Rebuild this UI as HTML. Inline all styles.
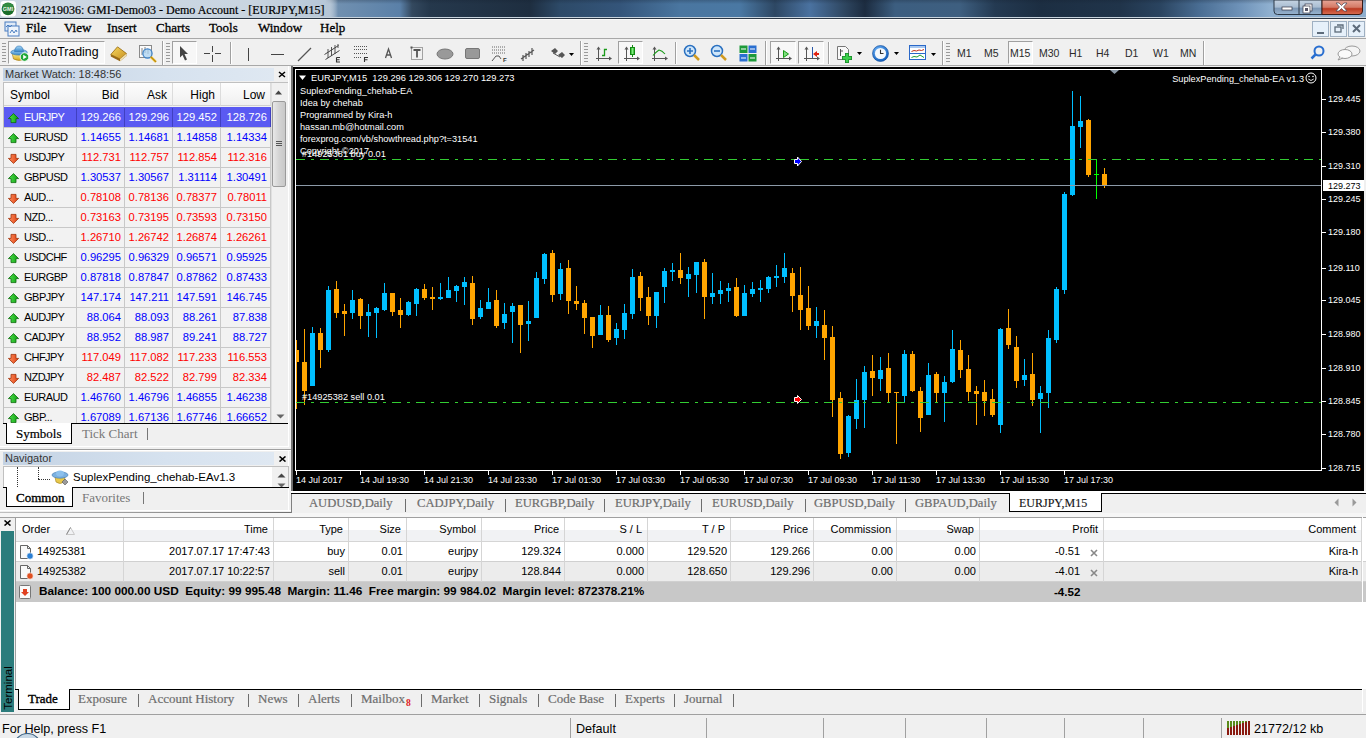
<!DOCTYPE html>
<html><head><meta charset="utf-8">
<style>
*{margin:0;padding:0;box-sizing:border-box}
html,body{width:1366px;height:738px;overflow:hidden;background:#f0f0f0;font-family:"Liberation Sans",sans-serif}
.a{position:absolute}
#title{left:0;top:0;width:1366px;height:19px;
background:linear-gradient(90deg,#c5d2df 0px,#b0c2d3 330px,#7090b0 338px,#5a80a8 400px,#34495f 412px,#25384c 430px,#1e2e40 530px,#2d4a68 560px,#34557a 620px,#4a76a0 680px,#4a78a3 740px,#2d4763 775px,#4a72a0 810px,#2e4660 845px,#1c2c40 865px,#3c5e80 895px,#3e5f80 960px,#243a52 995px,#1c2e42 1040px,#20344a 1120px,#2a4460 1160px,#4a6e94 1200px,#6e92b8 1240px,#8fb0d0 1270px,#8fafcf 1366px);
border-bottom:1px solid #2a3644;box-shadow:inset 0 -1px 0 #c8d4de}
#title .t{left:21px;top:2px;font:12px "Liberation Serif",serif;color:#000;white-space:pre;line-height:16px;-webkit-text-stroke:0.2px #000}
#menu{left:0;top:19px;width:1366px;height:19px;background:#f0f0f0;border-top:1px solid #fafafa}
#menu span{position:absolute;top:1px;font:13px "Liberation Serif",serif;color:#000;line-height:14px;-webkit-text-stroke:0.3px #000}
#tb{left:0;top:38px;width:1366px;height:28px;background:#f0f0f0;border-top:1px solid #a8a8a8;border-bottom:1px solid #a8a8a8}
.sep{position:absolute;width:2px;border-left:1px solid #a0a0a0;border-right:1px solid #fff}
.grip{position:absolute;width:4px;height:19px;background:repeating-linear-gradient(180deg,#9a9a9a 0 1px,transparent 1px 3px)}
.tbtn{position:absolute;border:1px solid;border-color:#a0a0a0 #fff #fff #a0a0a0;background:#f7f7f7}
.tf{position:absolute;top:10px;font:10.5px "Liberation Sans",sans-serif;color:#2a2a2a}
#left{left:0;top:66px;width:293px;height:447px;background:#f0f0f0;border-right:2px solid;border-image:linear-gradient(90deg,#c0c0c0,#707070) 1;border-bottom:1px solid #a0a0a0}
.phdr{position:absolute;left:3px;width:271px;height:13px;background:linear-gradient(90deg,#c3d2e3,#d6e2ef 60%,#dfe8f2);}
.phdr span{position:absolute;left:2px;top:0;font:11px "Liberation Sans",sans-serif;color:#333;line-height:13px}
.px{position:absolute;font:bold 12px "Liberation Sans",sans-serif;color:#000;line-height:12px}
.mwgrid{position:absolute;left:3px;top:82px;width:285px;height:342px;background:#f2f2f2;border:1px solid #c8c8c8;overflow:hidden}
.mwh{position:absolute;top:0;height:23px;font:12px "Liberation Sans",sans-serif;color:#000;border-right:1px solid #dcdcdc;background:linear-gradient(#fdfdfd,#f0f0f0);line-height:23px;border-bottom:1px solid #d0d0d0}
.mwr{position:absolute;left:0;width:267px;height:20px;border-bottom:1px solid #c8c8c8}
.mwr.sel{background:#5a5af2}
.mwr .c0{position:absolute;left:0;top:0;width:73px;height:20px;border-right:1px solid #c8c8c8;font:12px "Liberation Sans",sans-serif;line-height:19px}
.mwr .c0 span{position:absolute;left:20px}
.ar{position:absolute;left:4px;top:5px}
.mwr .cn{position:absolute;top:0;height:20px;text-align:right;font:11.2px "Liberation Sans",sans-serif;line-height:19px;padding-right:2px}
.vl{position:absolute;width:1px;background:#c8c8c8}
#chart{left:293px;top:67px;width:1071px;height:424px;background:#000}
svg text{font-family:"Liberation Sans",sans-serif}
.ax{font-size:9px;fill:#fff}
.ct{font-size:9.2px;fill:#fff}
#ctabs{left:291px;top:493px;width:1075px;height:20px;background:#f0f0f0;border-top:1px solid #000}
.ctab{position:absolute;top:2px;font:12.6px "Liberation Serif",serif;color:#6d6d6d;line-height:15px;white-space:pre;-webkit-text-stroke:0.2px #6d6d6d}
.tsep{position:absolute;width:1px;background:#6d6d6d}
#term{left:0;top:513px;width:1366px;height:200px;background:#f0f0f0}
.th{position:absolute;top:0;height:24px;font:11px "Liberation Sans",sans-serif;color:#000;line-height:22px;border-right:1px solid #d5d5d5;text-align:right;padding-right:5px;white-space:pre}
.td{position:absolute;height:20px;font:11px "Liberation Sans",sans-serif;color:#000;line-height:19px;text-align:right;padding-right:3px;white-space:pre;border-right:1px solid #d5d5d5}
.btab{position:absolute;top:3px;font:13px "Liberation Serif",serif;color:#6d6d6d;line-height:15px;white-space:pre;-webkit-text-stroke:0.2px #6d6d6d}
#status{left:0;top:714px;width:1366px;height:24px;background:#f0f0f0;border-top:1px solid #a0a0a0}
#status span{position:absolute;top:7px;font:12.6px "Liberation Sans",sans-serif;color:#000;line-height:14px;white-space:pre}
</style></head><body>

<!-- TITLE -->
<div id="title" class="a">
  <div class="a" style="left:0;top:0;width:1366px;height:4px;background:linear-gradient(rgba(20,30,45,0.25),rgba(20,30,45,0))"></div>
  <div class="a" style="left:0;top:0;width:338px;height:17px;background:linear-gradient(90deg,#cdd8e3 0,#c9d5e1 250px,#b7c7d7 325px,rgba(160,180,200,0) 338px)"></div>
  <svg class="a" style="left:0;top:1px" width="17" height="16"><rect x="0.5" y="0" width="15.5" height="15.5" rx="3" fill="#fff"/><circle cx="8" cy="7.8" r="6.4" fill="#1a6e2a"/><ellipse cx="8" cy="5.5" rx="5" ry="3.5" fill="#48a858" opacity="0.55"/><text x="8" y="9.8" font-size="5.5" fill="#e8f4e8" text-anchor="middle" font-weight="bold">GMI</text></svg>
  <div class="a t">2124219036: GMI-Demo03 - Demo Account - [EURJPY,M15]</div>
  <svg class="a" style="left:1273px;top:0" width="91" height="16" viewBox="0 0 91 16">
    <defs>
      <linearGradient id="wb" x1="0" y1="0" x2="0" y2="1"><stop offset="0" stop-color="#c5d3e2"/><stop offset="0.5" stop-color="#a9bdd2"/><stop offset="0.55" stop-color="#7b96b4"/><stop offset="1" stop-color="#98b4cf"/></linearGradient>
      <linearGradient id="wc" x1="0" y1="0" x2="0" y2="1"><stop offset="0" stop-color="#e7a698"/><stop offset="0.5" stop-color="#d47a66"/><stop offset="0.6" stop-color="#bb3a22"/><stop offset="1" stop-color="#d86e52"/></linearGradient>
    </defs>
    <path d="M1 0 L1 11 Q1 14.5 4.5 14.5 L49 14.5 L49 0 Z" fill="url(#wb)" stroke="#2c3846" stroke-width="1"/>
    <line x1="26" y1="0" x2="26" y2="14" stroke="#2c3846"/>
    <path d="M49 0 L49 14.5 L86 14.5 Q89.5 14.5 89.5 11 L89.5 0 Z" fill="url(#wc)" stroke="#3a1a14" stroke-width="1"/>
    <rect x="9" y="7" width="10" height="3" fill="#fff" stroke="#334" stroke-width="0.7"/>
    <rect x="32" y="4" width="7" height="7" fill="#fff" stroke="#334" stroke-width="0.7"/><rect x="30" y="6" width="7" height="7" fill="#fff" stroke="#334" stroke-width="0.7"/><rect x="32" y="8" width="3" height="3" fill="#556"/>
    <path d="M63 3 L66 3 L68.5 5.5 L71 3 L74 3 L70.5 7 L74 11 L71 11 L68.5 8.5 L66 11 L63 11 L66.5 7 Z" fill="#fff" stroke="#445" stroke-width="0.7"/>
  </svg>
</div>

<!-- MENU -->
<div id="menu" class="a">
  <svg class="a" style="left:4px;top:1px" width="16" height="16" viewBox="0 0 16 16"><rect x="1" y="1" width="11" height="9" fill="#dfeaf7" stroke="#4a7dc0"/><rect x="4" y="5" width="11" height="10" fill="#eef4fb" stroke="#4a7dc0"/><path d="M2 6 l2 -2 l2 2 l2 -2" stroke="#4a7dc0" fill="none"/><path d="M6 12 l2 -3 l2 3 l2 -3 l1 2" stroke="#4a7dc0" fill="none"/></svg>
  <span style="left:26px">File</span>
  <span style="left:64px">View</span>
  <span style="left:107px">Insert</span>
  <span style="left:156px">Charts</span>
  <span style="left:209px">Tools</span>
  <span style="left:258px">Window</span>
  <span style="left:320px">Help</span>
  <svg class="a" style="left:1312px;top:1px" width="54" height="17" viewBox="0 0 54 17">
    <g fill="#e6f0fa" stroke="#9fb0c2"><rect x="0.5" y="0.5" width="16" height="15"/><rect x="18.5" y="0.5" width="16" height="15"/><rect x="36.5" y="0.5" width="16" height="15"/></g>
    <rect x="5" y="11" width="7" height="2" fill="#5d6b7a"/>
    <rect x="23" y="6" width="6" height="5" fill="none" stroke="#5d6b7a" stroke-width="1.3"/><path d="M25 4 L31 4 L31 8" fill="none" stroke="#5d6b7a" stroke-width="1.3"/>
    <path d="M41 4 L48 11 M48 4 L41 11" stroke="#5d6b7a" stroke-width="2"/>
  </svg>
</div>

<!-- TOOLBAR -->
<div id="tb" class="a">
<div class="grip" style="left:2px;top:4px"></div>
<div class="tbtn" style="left:8px;top:2px;width:97px;height:23px"></div>
<svg class="a" style="left:10px;top:5px" width="20" height="19" viewBox="0 0 20 19"><defs><linearGradient id="yb" x1="0" x2="0" y1="0" y2="1"><stop offset="0" stop-color="#fff4a0"/><stop offset="1" stop-color="#d8a818"/></linearGradient><linearGradient id="hb" x1="0" x2="0" y1="0" y2="1"><stop offset="0" stop-color="#a8d8f8"/><stop offset="1" stop-color="#3a88c8"/></linearGradient></defs><path d="M2 9 L16 9 L14.5 15 Q9 18 3.5 15 Z" fill="url(#yb)" stroke="#a07818" stroke-width="0.6"/><ellipse cx="9" cy="8.3" rx="8.3" ry="2.8" fill="url(#hb)" stroke="#2a70b0" stroke-width="0.6"/><path d="M4.5 7.5 Q5 2 9 2 Q13 2 13.5 7.5 Z" fill="url(#hb)" stroke="#2a70b0" stroke-width="0.6"/><circle cx="14.5" cy="13" r="4.3" fill="#20a838" stroke="#fff" stroke-width="0.9"/><path d="M13.2 10.8 L16.8 13 L13.2 15.2 Z" fill="#fff"/></svg>
<span class="a" style="left:32px;top:6px;font:12.3px 'Liberation Sans',sans-serif;line-height:14px;color:#000">AutoTrading</span>
<svg class="a" style="left:110px;top:7px" width="18" height="16" viewBox="0 0 18 16"><defs><linearGradient id="bk" x1="0" y1="0" x2="1" y2="1"><stop offset="0" stop-color="#f6d860"/><stop offset="1" stop-color="#c89020"/></linearGradient></defs><path d="M0.8 8.5 L7.5 0.8 L16.5 7.5 L16.5 10 L10 15.2 L0.8 10.5 Z" fill="#9a6a18"/><path d="M0.8 8.5 L7.5 0.8 L16.5 7.5 L10 13 Z" fill="url(#bk)" stroke="#8a6010" stroke-width="0.6"/><path d="M10 13 L16.5 7.5 L16.5 10 L10 15.2 Z" fill="#f0e0b0"/></svg>
<svg class="a" style="left:138px;top:6px" width="20" height="19" viewBox="0 0 20 19"><rect x="1.5" y="0.5" width="12" height="12" fill="#fbfbfb" stroke="#8a8a8a"/><path d="M4 3 V10 M7 2 V8 M10 4 V9" stroke="#777" stroke-width="0.9"/><circle cx="9.5" cy="8.5" r="4.6" fill="rgba(170,210,240,0.75)" stroke="#3a80c8" stroke-width="1.2"/><path d="M12.8 11.8 L18 17" stroke="#e0b020" stroke-width="2.4"/><path d="M12.8 11.8 L18 17" stroke="#a07010" stroke-width="0.6"/></svg>
<div class="sep" style="left:162px;top:2px;height:24px"></div>
<div class="grip" style="left:166px;top:4px"></div>
<div class="tbtn" style="left:172px;top:2px;width:25px;height:23px"></div>
<svg class="a" style="left:179px;top:7px" width="10" height="15" viewBox="0 0 10 15"><path d="M1 0 L9 8 L5.5 8 L8 13.5 L6 14.5 L3.5 9 L1 11.5 Z" fill="#444"/></svg>
<svg class="a" style="left:204px;top:7px" width="17" height="16"><path d="M8.5 0 V6 M8.5 9 V16 M0 7.5 H6 M11 7.5 H17" stroke="#444" stroke-width="1"/></svg>
<div class="sep" style="left:230px;top:3px;height:22px"></div>
<div class="a" style="left:248px;top:9px;width:1px;height:13px;background:#444"></div>
<div class="a" style="left:271px;top:15px;width:13px;height:1px;background:#444"></div>
<svg class="a" style="left:297px;top:8px" width="15" height="15"><path d="M1 14 L14 1" stroke="#555" stroke-width="1.2"/></svg>
<svg class="a" style="left:320px;top:4px" width="110" height="21" viewBox="320 43 110 21"><path d="M324.5 54.5 L338.5 45.5 M325.5 59.5 L339.5 50.5" stroke="#444" stroke-width="1"/><path d="M328 49 V58 M331.5 47 V56 M335 45 V54 M338 44 V48" stroke="#444" stroke-width="0.9"/><path d="M336.5 57.5 H340 M336.5 57.5 V62 H340 M336.5 59.8 H339.5" stroke="#333" stroke-width="1.1" fill="none"/><path d="M354 46.5 H367 M354 49.5 H367 M354 53.5 H367 M354 57.5 H362" stroke="#555" stroke-width="1" stroke-dasharray="1 1"/><path d="M364 57.5 H368 M364.5 57.5 V62 M364.5 59.8 H367.5" stroke="#333" stroke-width="1.1" fill="none"/><path d="M385.5 58 L388.5 49 L391.5 58 M386.6 55 H390.4" stroke="#555" stroke-width="1.3" fill="none"/><rect x="411.5" y="47.5" width="11" height="12" fill="none" stroke="#555" stroke-dasharray="1 1"/><rect x="410.5" y="46.5" width="2" height="2" fill="#555"/><path d="M413.5 50 H420.5 M417 50 V57.5" stroke="#555" stroke-width="1.8"/></svg>
<svg class="a" style="left:436px;top:9px" width="18" height="12"><ellipse cx="9" cy="6" rx="8" ry="5" fill="#999" stroke="#777"/></svg>
<svg class="a" style="left:465px;top:9px" width="16" height="12"><rect x="0.5" y="0.5" width="14" height="10" rx="1.5" fill="#999" stroke="#777"/></svg>
<svg class="a" style="left:491px;top:6px" width="19" height="18" viewBox="0 0 19 18"><path d="M1 2 H14 M1 5 H14 M1 8 H14" stroke="#666" stroke-dasharray="1 1"/><path d="M1 16 L5 11 L8 11 L10 14" stroke="#555" fill="none"/><text x="12" y="17" font-size="6" fill="#333" font-weight="bold">F</text></svg>
<svg class="a" style="left:520px;top:7px" width="16" height="16" viewBox="0 0 16 16"><path d="M1 13 L14 4 M3 9 V15 M6 7 V13 M9 5 V11 M12 2 V9" stroke="#555" stroke-width="1.2"/></svg>
<svg class="a" style="left:549px;top:9px" width="26" height="13" viewBox="0 0 26 13"><path d="M2 3 L6 0 L9 3 L6 6 Z M9 7 L13 4 L16 7 L13 10 Z" fill="#555"/><path d="M4 5 L11 9" stroke="#555"/><path d="M20 5 L25 5 L22.5 8 Z" fill="#000"/></svg>
<div class="sep" style="left:580px;top:2px;height:24px"></div>
<div class="grip" style="left:584px;top:4px"></div>
<div class="tbtn" style="left:618px;top:2px;width:25px;height:23px"></div>
<svg class="a" style="left:590px;top:4px" width="80" height="20" viewBox="590 43 80 20"><defs><linearGradient id="cg" x1="0" x2="1"><stop offset="0" stop-color="#1a9a1a"/><stop offset="0.5" stop-color="#7ef07e"/><stop offset="1" stop-color="#1a9a1a"/></linearGradient></defs><path d="M598.5 48 V61" stroke="#555" stroke-width="1"/><path d="M596 58.5 H610" stroke="#555" stroke-width="1"/><path d="M596.5 49.5 L598.5 46.5 L600.5 49.5 Z" fill="#555"/><path d="M609 56.5 L612 58.5 L609 60.5 Z" fill="#555"/><path d="M602 55.5 H604.5 V49.5 H607" stroke="#1a9a1a" stroke-width="1.3" fill="none"/><path d="M626.5 48 V61" stroke="#555" stroke-width="1"/><path d="M624 58.5 H638" stroke="#555" stroke-width="1"/><path d="M624.5 49.5 L626.5 46.5 L628.5 49.5 Z" fill="#555"/><path d="M637 56.5 L640 58.5 L637 60.5 Z" fill="#555"/><path d="M632.5 45 V57" stroke="#128a12"/><rect x="630.5" y="47.5" width="4" height="7" fill="url(#cg)" stroke="#128a12"/><path d="M654.5 48 V61" stroke="#555" stroke-width="1"/><path d="M652 58.5 H666" stroke="#555" stroke-width="1"/><path d="M652.5 49.5 L654.5 46.5 L656.5 49.5 Z" fill="#555"/><path d="M665 56.5 L668 58.5 L665 60.5 Z" fill="#555"/><path d="M653 55.5 Q656 52 659 50 Q662 50.5 665 54" stroke="#1a9a1a" stroke-width="1.1" fill="none"/></svg>
<div class="sep" style="left:675px;top:3px;height:22px"></div>
<svg class="a" style="left:683px;top:5px" width="18" height="19" viewBox="0 0 18 19"><circle cx="7" cy="7" r="5.5" fill="#cfe6fa" stroke="#2a70c0" stroke-width="1.5"/><path d="M4 7 H10 M7 4 V10" stroke="#2a70c0" stroke-width="1.6"/><path d="M11 11 L16 16" stroke="#d09a20" stroke-width="2.5"/></svg>
<svg class="a" style="left:710px;top:5px" width="18" height="19" viewBox="0 0 18 19"><circle cx="7" cy="7" r="5.5" fill="#cfe6fa" stroke="#2a70c0" stroke-width="1.5"/><path d="M4 7 H10" stroke="#2a70c0" stroke-width="1.6"/><path d="M11 11 L16 16" stroke="#d09a20" stroke-width="2.5"/></svg>
<svg class="a" style="left:739px;top:6px" width="18" height="17" viewBox="0 0 18 17"><rect x="0.5" y="0.5" width="8" height="7.5" fill="#1d9a3a"/><rect x="9.5" y="0.5" width="8" height="7.5" fill="#2a6fd0"/><rect x="0.5" y="9" width="8" height="7.5" fill="#2a6fd0"/><rect x="9.5" y="9" width="8" height="7.5" fill="#1d9a3a"/><path d="M2 4 H7 M11 4 H16 M2 13 H7 M11 13 H16" stroke="#fff" stroke-width="1.2"/></svg>
<div class="sep" style="left:765px;top:2px;height:24px"></div>
<div class="tbtn" style="left:770px;top:2px;width:26px;height:23px"></div>
<svg class="a" style="left:770px;top:4px" width="30" height="20" viewBox="770 43 30 20"><path d="M778.5 48 V61" stroke="#555" stroke-width="1"/><path d="M776 58.5 H790" stroke="#555" stroke-width="1"/><path d="M776.5 49.5 L778.5 46.5 L780.5 49.5 Z" fill="#555"/><path d="M789 56.5 L792 58.5 L789 60.5 Z" fill="#555"/><path d="M783.5 50.5 L788.5 54 L783.5 57.5 Z" fill="#7ee07e" stroke="#1a9a1a"/></svg>
<div class="tbtn" style="left:798px;top:2px;width:26px;height:23px"></div>
<svg class="a" style="left:798px;top:4px" width="30" height="20" viewBox="798 43 30 20"><path d="M806.5 48 V61" stroke="#555" stroke-width="1"/><path d="M804 58.5 H818" stroke="#555" stroke-width="1"/><path d="M804.5 49.5 L806.5 46.5 L808.5 49.5 Z" fill="#555"/><path d="M817 56.5 L820 58.5 L817 60.5 Z" fill="#555"/><path d="M812.5 47 V58" stroke="#2a58a8"/><path d="M813 54 L817 51 V53 H819 V55 H817 V57 Z" fill="#e02010"/></svg>
<div class="sep" style="left:828px;top:3px;height:22px"></div>
<svg class="a" style="left:837px;top:5px" width="26" height="20" viewBox="0 0 26 20"><path d="M0.5 2.5 H8.5 L11.5 5.5 V15.5 H0.5 Z" fill="#f8f8f8" stroke="#777"/><path d="M3.5 5 V12 M3.5 7 H6" stroke="#555"/><path d="M10 9 V19 M5 14 H15" stroke="#1a8a2a" stroke-width="4"/><path d="M10 9.8 V18.2 M5.8 14 H14.2" stroke="#3cd04c" stroke-width="2.4"/><path d="M20 8 L25 8 L22.5 11 Z" fill="#000"/></svg>
<svg class="a" style="left:872px;top:5px" width="29" height="19" viewBox="0 0 29 19"><defs><radialGradient id="clk" cx="0.4" cy="0.35" r="0.7"><stop offset="0" stop-color="#7fc0ff"/><stop offset="1" stop-color="#0a58b8"/></radialGradient></defs><circle cx="8.5" cy="9.5" r="8" fill="url(#clk)" stroke="#0c4a9a" stroke-width="0.6"/><circle cx="8.5" cy="9.5" r="5.6" fill="#f4f8fc"/><path d="M8.5 5.8 V9.5 H11.5" stroke="#333" stroke-width="1.1" fill="none"/><path d="M22 8 L27 8 L24.5 11 Z" fill="#000"/></svg>
<svg class="a" style="left:909px;top:6px" width="29" height="17" viewBox="0 0 29 17"><rect x="0.5" y="0.5" width="16" height="14" fill="#fff" stroke="#2a68c8"/><rect x="1" y="1" width="15" height="2" fill="#a8c8f0"/><path d="M1 8.5 H16" stroke="#2a68c8"/><path d="M2.5 6.5 L5 5.5 L7.5 6 L10 5 L12.5 5.5 L15 4.5" stroke="#c03018" fill="none"/><path d="M2.5 12.5 L5 11.5 L8 12 L11 10 L15 12.5" stroke="#20a030" fill="none"/><path d="M22 8 L27 8 L24.5 11 Z" fill="#000"/></svg>
<div class="sep" style="left:942px;top:2px;height:24px"></div>
<div class="grip" style="left:946px;top:4px"></div>
<span class="tf" style="left:957px;top:8px">M1</span>
<span class="tf" style="left:984px;top:8px">M5</span>
<div class="tbtn" style="left:1008px;top:2px;width:25px;height:23px"></div>
<span class="tf" style="left:1010px;top:8px">M15</span>
<span class="tf" style="left:1039px;top:8px">M30</span>
<span class="tf" style="left:1069px;top:8px">H1</span>
<span class="tf" style="left:1096px;top:8px">H4</span>
<span class="tf" style="left:1125px;top:8px">D1</span>
<span class="tf" style="left:1153px;top:8px">W1</span>
<span class="tf" style="left:1180px;top:8px">MN</span>
<div class="sep" style="left:1203px;top:2px;height:24px"></div>
<svg class="a" style="left:1310px;top:6px" width="15" height="15" viewBox="0 0 15 15"><circle cx="9" cy="6" r="4.5" fill="none" stroke="#2a6fd0" stroke-width="2"/><path d="M6 9 L1.5 13.5" stroke="#2a6fd0" stroke-width="2.5"/></svg>
<svg class="a" style="left:1337px;top:6px" width="24" height="16" viewBox="0 0 24 16"><ellipse cx="15" cy="6" rx="8" ry="5" fill="#f4f4f4" stroke="#999"/><ellipse cx="8" cy="9" rx="7" ry="4.5" fill="#fafafa" stroke="#999"/><path d="M3 12 L1 15 L6 13" fill="#fafafa" stroke="#999"/></svg>
</div>

<!-- LEFT PANEL -->
<div id="left" class="a">
<div class="phdr" style="top:2px"><span>Market Watch: 18:48:56</span></div>
<svg class="a" style="left:278px;top:5px" width="8" height="7"><path d="M1 1 L7 6 M7 1 L1 6" stroke="#000" stroke-width="1.5"/></svg>
<div class="a" style="left:3px;top:16px;width:286px;height:342px;background:#f2f2f2;border:1px solid #c0c0c0;border-bottom:none;overflow:hidden">
<div class="mwh" style="left:0px;width:73px;text-align:left;padding-left:6px;line-height:25px">Symbol</div>
<div class="mwh" style="left:73px;width:48px;text-align:right;padding-right:5px;line-height:25px">Bid</div>
<div class="mwh" style="left:121px;width:48px;text-align:right;padding-right:5px;line-height:25px">Ask</div>
<div class="mwh" style="left:169px;width:48px;text-align:right;padding-right:5px;line-height:25px">High</div>
<div class="mwh" style="left:217px;width:50px;text-align:right;padding-right:5px;line-height:25px">Low</div>
<div class="a" style="left:0;top:25px;width:267px;height:20px;background:#5a5af2;box-shadow:0 -1px 0 #5a5af2;border-bottom:1px solid #c8c8c8">
<div class="a" style="left:0;top:0;width:73px;height:19px;border-right:1px solid #4040c0"><svg class="ar" width="12" height="11" viewBox="0 0 12 11"><defs><linearGradient id="ug" x1="0" x2="1"><stop offset="0" stop-color="#50e050"/><stop offset="1" stop-color="#10a010"/></linearGradient></defs><path d="M5.5 0.6 L10.6 5.6 L8 5.6 L8 9.6 L3 9.6 L3 5.6 L0.4 5.6 Z" fill="url(#ug)" stroke="#0a6a0a" stroke-width="0.8" stroke-linejoin="round"/></svg><span class="a" style="left:20px;top:3px;font:11px 'Liberation Sans',sans-serif;letter-spacing:-0.5px;line-height:13px;color:#fff">EURJPY</span></div>
<div class="a" style="left:73px;top:0;width:48px;height:19px;border-right:1px solid #4040c0;text-align:right;padding-right:3px;font:11.2px 'Liberation Sans',sans-serif;line-height:19px;color:#fff">129.266</div>
<div class="a" style="left:121px;top:0;width:48px;height:19px;border-right:1px solid #4040c0;text-align:right;padding-right:3px;font:11.2px 'Liberation Sans',sans-serif;line-height:19px;color:#fff">129.296</div>
<div class="a" style="left:169px;top:0;width:48px;height:19px;border-right:1px solid #4040c0;text-align:right;padding-right:3px;font:11.2px 'Liberation Sans',sans-serif;line-height:19px;color:#fff">129.452</div>
<div class="a" style="left:217px;top:0;width:50px;height:19px;border-right:1px solid #4040c0;text-align:right;padding-right:3px;font:11.2px 'Liberation Sans',sans-serif;line-height:19px;color:#fff">128.726</div>
</div>
<div class="a" style="left:0;top:45px;width:267px;height:20px;border-bottom:1px solid #c8c8c8">
<div class="a" style="left:0;top:0;width:73px;height:19px;border-right:1px solid #c8c8c8"><svg class="ar" width="12" height="11" viewBox="0 0 12 11"><defs><linearGradient id="ug" x1="0" x2="1"><stop offset="0" stop-color="#50e050"/><stop offset="1" stop-color="#10a010"/></linearGradient></defs><path d="M5.5 0.6 L10.6 5.6 L8 5.6 L8 9.6 L3 9.6 L3 5.6 L0.4 5.6 Z" fill="url(#ug)" stroke="#0a6a0a" stroke-width="0.8" stroke-linejoin="round"/></svg><span class="a" style="left:20px;top:3px;font:11px 'Liberation Sans',sans-serif;letter-spacing:-0.5px;line-height:13px;color:#000">EURUSD</span></div>
<div class="a" style="left:73px;top:0;width:48px;height:19px;border-right:1px solid #c8c8c8;text-align:right;padding-right:3px;font:11.2px 'Liberation Sans',sans-serif;line-height:19px;color:#0000ff">1.14655</div>
<div class="a" style="left:121px;top:0;width:48px;height:19px;border-right:1px solid #c8c8c8;text-align:right;padding-right:3px;font:11.2px 'Liberation Sans',sans-serif;line-height:19px;color:#0000ff">1.14681</div>
<div class="a" style="left:169px;top:0;width:48px;height:19px;border-right:1px solid #c8c8c8;text-align:right;padding-right:3px;font:11.2px 'Liberation Sans',sans-serif;line-height:19px;color:#0000ff">1.14858</div>
<div class="a" style="left:217px;top:0;width:50px;height:19px;border-right:1px solid #c8c8c8;text-align:right;padding-right:3px;font:11.2px 'Liberation Sans',sans-serif;line-height:19px;color:#0000ff">1.14334</div>
</div>
<div class="a" style="left:0;top:65px;width:267px;height:20px;border-bottom:1px solid #c8c8c8">
<div class="a" style="left:0;top:0;width:73px;height:19px;border-right:1px solid #c8c8c8"><svg class="ar" width="12" height="11" viewBox="0 0 12 11"><defs><linearGradient id="dg" x1="0" x2="1"><stop offset="0" stop-color="#ff9060"/><stop offset="1" stop-color="#e04010"/></linearGradient></defs><path d="M5.5 10.4 L10.6 5.4 L8 5.4 L8 1.4 L3 1.4 L3 5.4 L0.4 5.4 Z" fill="url(#dg)" stroke="#a03008" stroke-width="0.8" stroke-linejoin="round"/></svg><span class="a" style="left:20px;top:3px;font:11px 'Liberation Sans',sans-serif;letter-spacing:-0.5px;line-height:13px;color:#000">USDJPY</span></div>
<div class="a" style="left:73px;top:0;width:48px;height:19px;border-right:1px solid #c8c8c8;text-align:right;padding-right:3px;font:11.2px 'Liberation Sans',sans-serif;line-height:19px;color:#ff0000">112.731</div>
<div class="a" style="left:121px;top:0;width:48px;height:19px;border-right:1px solid #c8c8c8;text-align:right;padding-right:3px;font:11.2px 'Liberation Sans',sans-serif;line-height:19px;color:#ff0000">112.757</div>
<div class="a" style="left:169px;top:0;width:48px;height:19px;border-right:1px solid #c8c8c8;text-align:right;padding-right:3px;font:11.2px 'Liberation Sans',sans-serif;line-height:19px;color:#ff0000">112.854</div>
<div class="a" style="left:217px;top:0;width:50px;height:19px;border-right:1px solid #c8c8c8;text-align:right;padding-right:3px;font:11.2px 'Liberation Sans',sans-serif;line-height:19px;color:#ff0000">112.316</div>
</div>
<div class="a" style="left:0;top:85px;width:267px;height:20px;border-bottom:1px solid #c8c8c8">
<div class="a" style="left:0;top:0;width:73px;height:19px;border-right:1px solid #c8c8c8"><svg class="ar" width="12" height="11" viewBox="0 0 12 11"><defs><linearGradient id="ug" x1="0" x2="1"><stop offset="0" stop-color="#50e050"/><stop offset="1" stop-color="#10a010"/></linearGradient></defs><path d="M5.5 0.6 L10.6 5.6 L8 5.6 L8 9.6 L3 9.6 L3 5.6 L0.4 5.6 Z" fill="url(#ug)" stroke="#0a6a0a" stroke-width="0.8" stroke-linejoin="round"/></svg><span class="a" style="left:20px;top:3px;font:11px 'Liberation Sans',sans-serif;letter-spacing:-0.5px;line-height:13px;color:#000">GBPUSD</span></div>
<div class="a" style="left:73px;top:0;width:48px;height:19px;border-right:1px solid #c8c8c8;text-align:right;padding-right:3px;font:11.2px 'Liberation Sans',sans-serif;line-height:19px;color:#0000ff">1.30537</div>
<div class="a" style="left:121px;top:0;width:48px;height:19px;border-right:1px solid #c8c8c8;text-align:right;padding-right:3px;font:11.2px 'Liberation Sans',sans-serif;line-height:19px;color:#0000ff">1.30567</div>
<div class="a" style="left:169px;top:0;width:48px;height:19px;border-right:1px solid #c8c8c8;text-align:right;padding-right:3px;font:11.2px 'Liberation Sans',sans-serif;line-height:19px;color:#0000ff">1.31114</div>
<div class="a" style="left:217px;top:0;width:50px;height:19px;border-right:1px solid #c8c8c8;text-align:right;padding-right:3px;font:11.2px 'Liberation Sans',sans-serif;line-height:19px;color:#0000ff">1.30491</div>
</div>
<div class="a" style="left:0;top:105px;width:267px;height:20px;border-bottom:1px solid #c8c8c8">
<div class="a" style="left:0;top:0;width:73px;height:19px;border-right:1px solid #c8c8c8"><svg class="ar" width="12" height="11" viewBox="0 0 12 11"><defs><linearGradient id="dg" x1="0" x2="1"><stop offset="0" stop-color="#ff9060"/><stop offset="1" stop-color="#e04010"/></linearGradient></defs><path d="M5.5 10.4 L10.6 5.4 L8 5.4 L8 1.4 L3 1.4 L3 5.4 L0.4 5.4 Z" fill="url(#dg)" stroke="#a03008" stroke-width="0.8" stroke-linejoin="round"/></svg><span class="a" style="left:20px;top:3px;font:11px 'Liberation Sans',sans-serif;letter-spacing:-0.5px;line-height:13px;color:#000">AUD...</span></div>
<div class="a" style="left:73px;top:0;width:48px;height:19px;border-right:1px solid #c8c8c8;text-align:right;padding-right:3px;font:11.2px 'Liberation Sans',sans-serif;line-height:19px;color:#ff0000">0.78108</div>
<div class="a" style="left:121px;top:0;width:48px;height:19px;border-right:1px solid #c8c8c8;text-align:right;padding-right:3px;font:11.2px 'Liberation Sans',sans-serif;line-height:19px;color:#ff0000">0.78136</div>
<div class="a" style="left:169px;top:0;width:48px;height:19px;border-right:1px solid #c8c8c8;text-align:right;padding-right:3px;font:11.2px 'Liberation Sans',sans-serif;line-height:19px;color:#ff0000">0.78377</div>
<div class="a" style="left:217px;top:0;width:50px;height:19px;border-right:1px solid #c8c8c8;text-align:right;padding-right:3px;font:11.2px 'Liberation Sans',sans-serif;line-height:19px;color:#ff0000">0.78011</div>
</div>
<div class="a" style="left:0;top:125px;width:267px;height:20px;border-bottom:1px solid #c8c8c8">
<div class="a" style="left:0;top:0;width:73px;height:19px;border-right:1px solid #c8c8c8"><svg class="ar" width="12" height="11" viewBox="0 0 12 11"><defs><linearGradient id="dg" x1="0" x2="1"><stop offset="0" stop-color="#ff9060"/><stop offset="1" stop-color="#e04010"/></linearGradient></defs><path d="M5.5 10.4 L10.6 5.4 L8 5.4 L8 1.4 L3 1.4 L3 5.4 L0.4 5.4 Z" fill="url(#dg)" stroke="#a03008" stroke-width="0.8" stroke-linejoin="round"/></svg><span class="a" style="left:20px;top:3px;font:11px 'Liberation Sans',sans-serif;letter-spacing:-0.5px;line-height:13px;color:#000">NZD...</span></div>
<div class="a" style="left:73px;top:0;width:48px;height:19px;border-right:1px solid #c8c8c8;text-align:right;padding-right:3px;font:11.2px 'Liberation Sans',sans-serif;line-height:19px;color:#ff0000">0.73163</div>
<div class="a" style="left:121px;top:0;width:48px;height:19px;border-right:1px solid #c8c8c8;text-align:right;padding-right:3px;font:11.2px 'Liberation Sans',sans-serif;line-height:19px;color:#ff0000">0.73195</div>
<div class="a" style="left:169px;top:0;width:48px;height:19px;border-right:1px solid #c8c8c8;text-align:right;padding-right:3px;font:11.2px 'Liberation Sans',sans-serif;line-height:19px;color:#ff0000">0.73593</div>
<div class="a" style="left:217px;top:0;width:50px;height:19px;border-right:1px solid #c8c8c8;text-align:right;padding-right:3px;font:11.2px 'Liberation Sans',sans-serif;line-height:19px;color:#ff0000">0.73150</div>
</div>
<div class="a" style="left:0;top:145px;width:267px;height:20px;border-bottom:1px solid #c8c8c8">
<div class="a" style="left:0;top:0;width:73px;height:19px;border-right:1px solid #c8c8c8"><svg class="ar" width="12" height="11" viewBox="0 0 12 11"><defs><linearGradient id="dg" x1="0" x2="1"><stop offset="0" stop-color="#ff9060"/><stop offset="1" stop-color="#e04010"/></linearGradient></defs><path d="M5.5 10.4 L10.6 5.4 L8 5.4 L8 1.4 L3 1.4 L3 5.4 L0.4 5.4 Z" fill="url(#dg)" stroke="#a03008" stroke-width="0.8" stroke-linejoin="round"/></svg><span class="a" style="left:20px;top:3px;font:11px 'Liberation Sans',sans-serif;letter-spacing:-0.5px;line-height:13px;color:#000">USD...</span></div>
<div class="a" style="left:73px;top:0;width:48px;height:19px;border-right:1px solid #c8c8c8;text-align:right;padding-right:3px;font:11.2px 'Liberation Sans',sans-serif;line-height:19px;color:#ff0000">1.26710</div>
<div class="a" style="left:121px;top:0;width:48px;height:19px;border-right:1px solid #c8c8c8;text-align:right;padding-right:3px;font:11.2px 'Liberation Sans',sans-serif;line-height:19px;color:#ff0000">1.26742</div>
<div class="a" style="left:169px;top:0;width:48px;height:19px;border-right:1px solid #c8c8c8;text-align:right;padding-right:3px;font:11.2px 'Liberation Sans',sans-serif;line-height:19px;color:#ff0000">1.26874</div>
<div class="a" style="left:217px;top:0;width:50px;height:19px;border-right:1px solid #c8c8c8;text-align:right;padding-right:3px;font:11.2px 'Liberation Sans',sans-serif;line-height:19px;color:#ff0000">1.26261</div>
</div>
<div class="a" style="left:0;top:165px;width:267px;height:20px;border-bottom:1px solid #c8c8c8">
<div class="a" style="left:0;top:0;width:73px;height:19px;border-right:1px solid #c8c8c8"><svg class="ar" width="12" height="11" viewBox="0 0 12 11"><defs><linearGradient id="ug" x1="0" x2="1"><stop offset="0" stop-color="#50e050"/><stop offset="1" stop-color="#10a010"/></linearGradient></defs><path d="M5.5 0.6 L10.6 5.6 L8 5.6 L8 9.6 L3 9.6 L3 5.6 L0.4 5.6 Z" fill="url(#ug)" stroke="#0a6a0a" stroke-width="0.8" stroke-linejoin="round"/></svg><span class="a" style="left:20px;top:3px;font:11px 'Liberation Sans',sans-serif;letter-spacing:-0.5px;line-height:13px;color:#000">USDCHF</span></div>
<div class="a" style="left:73px;top:0;width:48px;height:19px;border-right:1px solid #c8c8c8;text-align:right;padding-right:3px;font:11.2px 'Liberation Sans',sans-serif;line-height:19px;color:#0000ff">0.96295</div>
<div class="a" style="left:121px;top:0;width:48px;height:19px;border-right:1px solid #c8c8c8;text-align:right;padding-right:3px;font:11.2px 'Liberation Sans',sans-serif;line-height:19px;color:#0000ff">0.96329</div>
<div class="a" style="left:169px;top:0;width:48px;height:19px;border-right:1px solid #c8c8c8;text-align:right;padding-right:3px;font:11.2px 'Liberation Sans',sans-serif;line-height:19px;color:#0000ff">0.96571</div>
<div class="a" style="left:217px;top:0;width:50px;height:19px;border-right:1px solid #c8c8c8;text-align:right;padding-right:3px;font:11.2px 'Liberation Sans',sans-serif;line-height:19px;color:#0000ff">0.95925</div>
</div>
<div class="a" style="left:0;top:185px;width:267px;height:20px;border-bottom:1px solid #c8c8c8">
<div class="a" style="left:0;top:0;width:73px;height:19px;border-right:1px solid #c8c8c8"><svg class="ar" width="12" height="11" viewBox="0 0 12 11"><defs><linearGradient id="ug" x1="0" x2="1"><stop offset="0" stop-color="#50e050"/><stop offset="1" stop-color="#10a010"/></linearGradient></defs><path d="M5.5 0.6 L10.6 5.6 L8 5.6 L8 9.6 L3 9.6 L3 5.6 L0.4 5.6 Z" fill="url(#ug)" stroke="#0a6a0a" stroke-width="0.8" stroke-linejoin="round"/></svg><span class="a" style="left:20px;top:3px;font:11px 'Liberation Sans',sans-serif;letter-spacing:-0.5px;line-height:13px;color:#000">EURGBP</span></div>
<div class="a" style="left:73px;top:0;width:48px;height:19px;border-right:1px solid #c8c8c8;text-align:right;padding-right:3px;font:11.2px 'Liberation Sans',sans-serif;line-height:19px;color:#0000ff">0.87818</div>
<div class="a" style="left:121px;top:0;width:48px;height:19px;border-right:1px solid #c8c8c8;text-align:right;padding-right:3px;font:11.2px 'Liberation Sans',sans-serif;line-height:19px;color:#0000ff">0.87847</div>
<div class="a" style="left:169px;top:0;width:48px;height:19px;border-right:1px solid #c8c8c8;text-align:right;padding-right:3px;font:11.2px 'Liberation Sans',sans-serif;line-height:19px;color:#0000ff">0.87862</div>
<div class="a" style="left:217px;top:0;width:50px;height:19px;border-right:1px solid #c8c8c8;text-align:right;padding-right:3px;font:11.2px 'Liberation Sans',sans-serif;line-height:19px;color:#0000ff">0.87433</div>
</div>
<div class="a" style="left:0;top:205px;width:267px;height:20px;border-bottom:1px solid #c8c8c8">
<div class="a" style="left:0;top:0;width:73px;height:19px;border-right:1px solid #c8c8c8"><svg class="ar" width="12" height="11" viewBox="0 0 12 11"><defs><linearGradient id="ug" x1="0" x2="1"><stop offset="0" stop-color="#50e050"/><stop offset="1" stop-color="#10a010"/></linearGradient></defs><path d="M5.5 0.6 L10.6 5.6 L8 5.6 L8 9.6 L3 9.6 L3 5.6 L0.4 5.6 Z" fill="url(#ug)" stroke="#0a6a0a" stroke-width="0.8" stroke-linejoin="round"/></svg><span class="a" style="left:20px;top:3px;font:11px 'Liberation Sans',sans-serif;letter-spacing:-0.5px;line-height:13px;color:#000">GBPJPY</span></div>
<div class="a" style="left:73px;top:0;width:48px;height:19px;border-right:1px solid #c8c8c8;text-align:right;padding-right:3px;font:11.2px 'Liberation Sans',sans-serif;line-height:19px;color:#0000ff">147.174</div>
<div class="a" style="left:121px;top:0;width:48px;height:19px;border-right:1px solid #c8c8c8;text-align:right;padding-right:3px;font:11.2px 'Liberation Sans',sans-serif;line-height:19px;color:#0000ff">147.211</div>
<div class="a" style="left:169px;top:0;width:48px;height:19px;border-right:1px solid #c8c8c8;text-align:right;padding-right:3px;font:11.2px 'Liberation Sans',sans-serif;line-height:19px;color:#0000ff">147.591</div>
<div class="a" style="left:217px;top:0;width:50px;height:19px;border-right:1px solid #c8c8c8;text-align:right;padding-right:3px;font:11.2px 'Liberation Sans',sans-serif;line-height:19px;color:#0000ff">146.745</div>
</div>
<div class="a" style="left:0;top:225px;width:267px;height:20px;border-bottom:1px solid #c8c8c8">
<div class="a" style="left:0;top:0;width:73px;height:19px;border-right:1px solid #c8c8c8"><svg class="ar" width="12" height="11" viewBox="0 0 12 11"><defs><linearGradient id="ug" x1="0" x2="1"><stop offset="0" stop-color="#50e050"/><stop offset="1" stop-color="#10a010"/></linearGradient></defs><path d="M5.5 0.6 L10.6 5.6 L8 5.6 L8 9.6 L3 9.6 L3 5.6 L0.4 5.6 Z" fill="url(#ug)" stroke="#0a6a0a" stroke-width="0.8" stroke-linejoin="round"/></svg><span class="a" style="left:20px;top:3px;font:11px 'Liberation Sans',sans-serif;letter-spacing:-0.5px;line-height:13px;color:#000">AUDJPY</span></div>
<div class="a" style="left:73px;top:0;width:48px;height:19px;border-right:1px solid #c8c8c8;text-align:right;padding-right:3px;font:11.2px 'Liberation Sans',sans-serif;line-height:19px;color:#0000ff">88.064</div>
<div class="a" style="left:121px;top:0;width:48px;height:19px;border-right:1px solid #c8c8c8;text-align:right;padding-right:3px;font:11.2px 'Liberation Sans',sans-serif;line-height:19px;color:#0000ff">88.093</div>
<div class="a" style="left:169px;top:0;width:48px;height:19px;border-right:1px solid #c8c8c8;text-align:right;padding-right:3px;font:11.2px 'Liberation Sans',sans-serif;line-height:19px;color:#0000ff">88.261</div>
<div class="a" style="left:217px;top:0;width:50px;height:19px;border-right:1px solid #c8c8c8;text-align:right;padding-right:3px;font:11.2px 'Liberation Sans',sans-serif;line-height:19px;color:#0000ff">87.838</div>
</div>
<div class="a" style="left:0;top:245px;width:267px;height:20px;border-bottom:1px solid #c8c8c8">
<div class="a" style="left:0;top:0;width:73px;height:19px;border-right:1px solid #c8c8c8"><svg class="ar" width="12" height="11" viewBox="0 0 12 11"><defs><linearGradient id="ug" x1="0" x2="1"><stop offset="0" stop-color="#50e050"/><stop offset="1" stop-color="#10a010"/></linearGradient></defs><path d="M5.5 0.6 L10.6 5.6 L8 5.6 L8 9.6 L3 9.6 L3 5.6 L0.4 5.6 Z" fill="url(#ug)" stroke="#0a6a0a" stroke-width="0.8" stroke-linejoin="round"/></svg><span class="a" style="left:20px;top:3px;font:11px 'Liberation Sans',sans-serif;letter-spacing:-0.5px;line-height:13px;color:#000">CADJPY</span></div>
<div class="a" style="left:73px;top:0;width:48px;height:19px;border-right:1px solid #c8c8c8;text-align:right;padding-right:3px;font:11.2px 'Liberation Sans',sans-serif;line-height:19px;color:#0000ff">88.952</div>
<div class="a" style="left:121px;top:0;width:48px;height:19px;border-right:1px solid #c8c8c8;text-align:right;padding-right:3px;font:11.2px 'Liberation Sans',sans-serif;line-height:19px;color:#0000ff">88.987</div>
<div class="a" style="left:169px;top:0;width:48px;height:19px;border-right:1px solid #c8c8c8;text-align:right;padding-right:3px;font:11.2px 'Liberation Sans',sans-serif;line-height:19px;color:#0000ff">89.241</div>
<div class="a" style="left:217px;top:0;width:50px;height:19px;border-right:1px solid #c8c8c8;text-align:right;padding-right:3px;font:11.2px 'Liberation Sans',sans-serif;line-height:19px;color:#0000ff">88.727</div>
</div>
<div class="a" style="left:0;top:265px;width:267px;height:20px;border-bottom:1px solid #c8c8c8">
<div class="a" style="left:0;top:0;width:73px;height:19px;border-right:1px solid #c8c8c8"><svg class="ar" width="12" height="11" viewBox="0 0 12 11"><defs><linearGradient id="dg" x1="0" x2="1"><stop offset="0" stop-color="#ff9060"/><stop offset="1" stop-color="#e04010"/></linearGradient></defs><path d="M5.5 10.4 L10.6 5.4 L8 5.4 L8 1.4 L3 1.4 L3 5.4 L0.4 5.4 Z" fill="url(#dg)" stroke="#a03008" stroke-width="0.8" stroke-linejoin="round"/></svg><span class="a" style="left:20px;top:3px;font:11px 'Liberation Sans',sans-serif;letter-spacing:-0.5px;line-height:13px;color:#000">CHFJPY</span></div>
<div class="a" style="left:73px;top:0;width:48px;height:19px;border-right:1px solid #c8c8c8;text-align:right;padding-right:3px;font:11.2px 'Liberation Sans',sans-serif;line-height:19px;color:#ff0000">117.049</div>
<div class="a" style="left:121px;top:0;width:48px;height:19px;border-right:1px solid #c8c8c8;text-align:right;padding-right:3px;font:11.2px 'Liberation Sans',sans-serif;line-height:19px;color:#ff0000">117.082</div>
<div class="a" style="left:169px;top:0;width:48px;height:19px;border-right:1px solid #c8c8c8;text-align:right;padding-right:3px;font:11.2px 'Liberation Sans',sans-serif;line-height:19px;color:#ff0000">117.233</div>
<div class="a" style="left:217px;top:0;width:50px;height:19px;border-right:1px solid #c8c8c8;text-align:right;padding-right:3px;font:11.2px 'Liberation Sans',sans-serif;line-height:19px;color:#ff0000">116.553</div>
</div>
<div class="a" style="left:0;top:285px;width:267px;height:20px;border-bottom:1px solid #c8c8c8">
<div class="a" style="left:0;top:0;width:73px;height:19px;border-right:1px solid #c8c8c8"><svg class="ar" width="12" height="11" viewBox="0 0 12 11"><defs><linearGradient id="dg" x1="0" x2="1"><stop offset="0" stop-color="#ff9060"/><stop offset="1" stop-color="#e04010"/></linearGradient></defs><path d="M5.5 10.4 L10.6 5.4 L8 5.4 L8 1.4 L3 1.4 L3 5.4 L0.4 5.4 Z" fill="url(#dg)" stroke="#a03008" stroke-width="0.8" stroke-linejoin="round"/></svg><span class="a" style="left:20px;top:3px;font:11px 'Liberation Sans',sans-serif;letter-spacing:-0.5px;line-height:13px;color:#000">NZDJPY</span></div>
<div class="a" style="left:73px;top:0;width:48px;height:19px;border-right:1px solid #c8c8c8;text-align:right;padding-right:3px;font:11.2px 'Liberation Sans',sans-serif;line-height:19px;color:#ff0000">82.487</div>
<div class="a" style="left:121px;top:0;width:48px;height:19px;border-right:1px solid #c8c8c8;text-align:right;padding-right:3px;font:11.2px 'Liberation Sans',sans-serif;line-height:19px;color:#ff0000">82.522</div>
<div class="a" style="left:169px;top:0;width:48px;height:19px;border-right:1px solid #c8c8c8;text-align:right;padding-right:3px;font:11.2px 'Liberation Sans',sans-serif;line-height:19px;color:#ff0000">82.799</div>
<div class="a" style="left:217px;top:0;width:50px;height:19px;border-right:1px solid #c8c8c8;text-align:right;padding-right:3px;font:11.2px 'Liberation Sans',sans-serif;line-height:19px;color:#ff0000">82.334</div>
</div>
<div class="a" style="left:0;top:305px;width:267px;height:20px;border-bottom:1px solid #c8c8c8">
<div class="a" style="left:0;top:0;width:73px;height:19px;border-right:1px solid #c8c8c8"><svg class="ar" width="12" height="11" viewBox="0 0 12 11"><defs><linearGradient id="ug" x1="0" x2="1"><stop offset="0" stop-color="#50e050"/><stop offset="1" stop-color="#10a010"/></linearGradient></defs><path d="M5.5 0.6 L10.6 5.6 L8 5.6 L8 9.6 L3 9.6 L3 5.6 L0.4 5.6 Z" fill="url(#ug)" stroke="#0a6a0a" stroke-width="0.8" stroke-linejoin="round"/></svg><span class="a" style="left:20px;top:3px;font:11px 'Liberation Sans',sans-serif;letter-spacing:-0.5px;line-height:13px;color:#000">EURAUD</span></div>
<div class="a" style="left:73px;top:0;width:48px;height:19px;border-right:1px solid #c8c8c8;text-align:right;padding-right:3px;font:11.2px 'Liberation Sans',sans-serif;line-height:19px;color:#0000ff">1.46760</div>
<div class="a" style="left:121px;top:0;width:48px;height:19px;border-right:1px solid #c8c8c8;text-align:right;padding-right:3px;font:11.2px 'Liberation Sans',sans-serif;line-height:19px;color:#0000ff">1.46796</div>
<div class="a" style="left:169px;top:0;width:48px;height:19px;border-right:1px solid #c8c8c8;text-align:right;padding-right:3px;font:11.2px 'Liberation Sans',sans-serif;line-height:19px;color:#0000ff">1.46855</div>
<div class="a" style="left:217px;top:0;width:50px;height:19px;border-right:1px solid #c8c8c8;text-align:right;padding-right:3px;font:11.2px 'Liberation Sans',sans-serif;line-height:19px;color:#0000ff">1.46238</div>
</div>
<div class="a" style="left:0;top:325px;width:267px;height:20px;border-bottom:1px solid #c8c8c8">
<div class="a" style="left:0;top:0;width:73px;height:19px;border-right:1px solid #c8c8c8"><svg class="ar" width="12" height="11" viewBox="0 0 12 11"><defs><linearGradient id="ug" x1="0" x2="1"><stop offset="0" stop-color="#50e050"/><stop offset="1" stop-color="#10a010"/></linearGradient></defs><path d="M5.5 0.6 L10.6 5.6 L8 5.6 L8 9.6 L3 9.6 L3 5.6 L0.4 5.6 Z" fill="url(#ug)" stroke="#0a6a0a" stroke-width="0.8" stroke-linejoin="round"/></svg><span class="a" style="left:20px;top:3px;font:11px 'Liberation Sans',sans-serif;letter-spacing:-0.5px;line-height:13px;color:#000">GBP...</span></div>
<div class="a" style="left:73px;top:0;width:48px;height:19px;border-right:1px solid #c8c8c8;text-align:right;padding-right:3px;font:11.2px 'Liberation Sans',sans-serif;line-height:19px;color:#0000ff">1.67089</div>
<div class="a" style="left:121px;top:0;width:48px;height:19px;border-right:1px solid #c8c8c8;text-align:right;padding-right:3px;font:11.2px 'Liberation Sans',sans-serif;line-height:19px;color:#0000ff">1.67136</div>
<div class="a" style="left:169px;top:0;width:48px;height:19px;border-right:1px solid #c8c8c8;text-align:right;padding-right:3px;font:11.2px 'Liberation Sans',sans-serif;line-height:19px;color:#0000ff">1.67746</div>
<div class="a" style="left:217px;top:0;width:50px;height:19px;border-right:1px solid #c8c8c8;text-align:right;padding-right:3px;font:11.2px 'Liberation Sans',sans-serif;line-height:19px;color:#0000ff">1.66652</div>
</div>
<div class="a" style="left:267px;top:0;width:18px;height:342px;background:#f0f0f0;border-left:1px solid #e0e0e0"></div>
<svg class="a" style="left:271px;top:7px" width="8" height="5"><path d="M0 4.5 L3.5 0.5 L7 4.5 Z" fill="#444"/></svg>
<div class="a" style="left:268px;top:18px;width:14px;height:86px;border:1px solid #9a9a9a;border-radius:2px;background:linear-gradient(90deg,#e8e8e8,#d4d4d4 50%,#c8c8c8)"></div>
<div class="a" style="left:272px;top:58px;width:6px;height:5px;background:repeating-linear-gradient(180deg,#555 0 1px,transparent 1px 2px)"></div>
<svg class="a" style="left:272px;top:331px" width="9" height="5"><path d="M0.5 0.5 L4.5 4.5 L8.5 0.5 Z" fill="#666"/></svg>
</div>
<div class="a" style="left:3px;top:357px;width:286px;height:1px;background:#000"></div>
<div class="a" style="left:6px;top:357px;width:66px;height:21px;background:#fff;border:1px solid #000;border-top:none"></div>
<span class="a" style="left:16px;top:360px;font:13px 'Liberation Serif',serif;line-height:15px;color:#000;-webkit-text-stroke:0.2px #000">Symbols</span>
<span class="a" style="left:82px;top:360px;font:13px 'Liberation Serif',serif;line-height:15px;color:#777">Tick Chart</span>
<div class="a" style="left:147px;top:362px;width:1px;height:12px;background:#777"></div>
<div class="a" style="left:0;top:380px;width:289px;height:1px;background:#fff"></div>
<div class="a" style="left:288px;top:0;width:1px;height:381px;background:#fff"></div>
<div class="a" style="left:0;top:383px;width:291px;height:1px;background:#a0a0a0"></div>
<div class="a" style="left:0;top:384px;width:291px;height:1px;background:#fff"></div>
<div class="a" style="left:288px;top:385px;width:1px;height:60px;background:#fff"></div>
<div class="phdr" style="top:386px"><span>Navigator</span></div>
<svg class="a" style="left:279px;top:390px" width="7" height="6"><path d="M0.5 0.5 L6.5 5.5 M6.5 0.5 L0.5 5.5" stroke="#000" stroke-width="1.6"/></svg>
<div class="a" style="left:3px;top:400px;width:286px;height:21px;background:#fff;border:1px solid #c0c0c0;border-bottom:none;overflow:hidden">
<div class="a" style="left:13px;top:0;width:1px;height:20px;border-left:1px dotted #333"></div>
<div class="a" style="left:34px;top:0;width:1px;height:12px;border-left:1px dotted #333"></div>
<div class="a" style="left:34px;top:12px;width:12px;height:1px;border-top:1px dotted #333"></div>
<svg class="a" style="left:47px;top:2px" width="18" height="17" viewBox="0 0 18 17"><path d="M4 8 L14 8 L13 13 Q9 16 5 13 Z" fill="#e8c84a" stroke="#a08020" stroke-width="0.6"/><ellipse cx="9" cy="6" rx="8" ry="3.2" fill="#7ab0e0" stroke="#3f78b0" stroke-width="0.6"/><ellipse cx="9" cy="4.5" rx="4" ry="3" fill="#8cc0ec"/><path d="M14 10 L17 13 L14 16 L11 13 Z" fill="#999" stroke="#555" stroke-width="0.6"/></svg>
<span class="a" style="left:69px;top:3px;font:11.5px 'Liberation Sans',sans-serif;line-height:14px;color:#000">SuplexPending_chehab-EAv1.3</span>
<div class="a" style="left:268px;top:0;width:17px;height:21px;background:#f0f0f0"></div>
<svg class="a" style="left:273px;top:6px" width="9" height="5"><path d="M0.5 4.5 L4.5 0.5 L8.5 4.5 Z" fill="#444"/></svg>
<svg class="a" style="left:273px;top:16px" width="9" height="5"><path d="M0.5 0.5 L4.5 4.5 L8.5 0.5 Z" fill="#666"/></svg>
</div>
<div class="a" style="left:3px;top:421px;width:286px;height:1px;background:#000"></div>
<div class="a" style="left:6px;top:421px;width:67px;height:20px;background:#fff;border:1px solid #000;border-top:none"></div>
<span class="a" style="left:16px;top:424px;font:13px 'Liberation Serif',serif;line-height:15px;color:#000;-webkit-text-stroke:0.35px #000">Common</span>
<span class="a" style="left:82px;top:424px;font:13px 'Liberation Serif',serif;line-height:15px;color:#777">Favorites</span>
<div class="a" style="left:143px;top:426px;width:1px;height:12px;background:#777"></div>
<div class="a" style="left:0;top:444px;width:291px;height:1px;background:#fff"></div>
</div>

<!-- CHART -->
<div id="chart" class="a">
<svg width="1071" height="424" viewBox="293 67 1071 424" style="position:absolute;left:0;top:0">
<defs><clipPath id="plot"><rect x="296" y="70" width="1025" height="400"/></clipPath></defs>
<rect x="295.5" y="69.5" width="1026" height="401" fill="none" stroke="#fff" stroke-width="1"/>
<g clip-path="url(#plot)">
<rect x="296" y="340" width="1" height="69" fill="#ffa500"/>
<rect x="294" y="350" width="5" height="12" fill="#ffa500"/>
<rect x="304" y="329" width="1" height="76" fill="#ffa500"/>
<rect x="302" y="362" width="5" height="29" fill="#ffa500"/>
<rect x="312" y="327" width="1" height="59" fill="#00bfff"/>
<rect x="310" y="333" width="5" height="53" fill="#00bfff"/>
<rect x="320" y="328" width="1" height="40" fill="#ffa500"/>
<rect x="318" y="333" width="5" height="17" fill="#ffa500"/>
<rect x="328" y="286" width="1" height="66" fill="#00bfff"/>
<rect x="326" y="290" width="5" height="60" fill="#00bfff"/>
<rect x="336" y="281" width="1" height="37" fill="#ffa500"/>
<rect x="334" y="289" width="5" height="24" fill="#ffa500"/>
<rect x="344" y="304" width="1" height="32" fill="#ffa500"/>
<rect x="342" y="311" width="5" height="3" fill="#ffa500"/>
<rect x="352" y="290" width="1" height="29" fill="#00bfff"/>
<rect x="350" y="300" width="5" height="13" fill="#00bfff"/>
<rect x="360" y="298" width="1" height="31" fill="#ffa500"/>
<rect x="358" y="299" width="5" height="17" fill="#ffa500"/>
<rect x="368" y="304" width="1" height="33" fill="#00bfff"/>
<rect x="366" y="312" width="5" height="4" fill="#00bfff"/>
<rect x="376" y="307" width="1" height="31" fill="#00bfff"/>
<rect x="374" y="308" width="5" height="5" fill="#00bfff"/>
<rect x="384" y="283" width="1" height="28" fill="#00bfff"/>
<rect x="382" y="293" width="5" height="17" fill="#00bfff"/>
<rect x="392" y="293" width="1" height="23" fill="#ffa500"/>
<rect x="390" y="293" width="5" height="19" fill="#ffa500"/>
<rect x="400" y="298" width="1" height="30" fill="#ffa500"/>
<rect x="398" y="310" width="5" height="5" fill="#ffa500"/>
<rect x="408" y="301" width="1" height="15" fill="#00bfff"/>
<rect x="406" y="302" width="5" height="13" fill="#00bfff"/>
<rect x="416" y="288" width="1" height="28" fill="#00bfff"/>
<rect x="414" y="289" width="5" height="15" fill="#00bfff"/>
<rect x="424" y="284" width="1" height="16" fill="#ffa500"/>
<rect x="422" y="289" width="5" height="9" fill="#ffa500"/>
<rect x="432" y="287" width="1" height="23" fill="#ffa500"/>
<rect x="430" y="297" width="5" height="2" fill="#ffa500"/>
<rect x="440" y="283" width="1" height="17" fill="#00bfff"/>
<rect x="438" y="297" width="5" height="2" fill="#00bfff"/>
<rect x="448" y="277" width="1" height="21" fill="#00bfff"/>
<rect x="446" y="290" width="5" height="8" fill="#00bfff"/>
<rect x="456" y="285" width="1" height="17" fill="#00bfff"/>
<rect x="454" y="286" width="5" height="5" fill="#00bfff"/>
<rect x="464" y="277" width="1" height="28" fill="#00bfff"/>
<rect x="462" y="282" width="5" height="5" fill="#00bfff"/>
<rect x="472" y="276" width="1" height="49" fill="#ffa500"/>
<rect x="470" y="283" width="5" height="36" fill="#ffa500"/>
<rect x="480" y="300" width="1" height="19" fill="#00bfff"/>
<rect x="478" y="308" width="5" height="9" fill="#00bfff"/>
<rect x="488" y="288" width="1" height="21" fill="#00bfff"/>
<rect x="486" y="302" width="5" height="7" fill="#00bfff"/>
<rect x="496" y="290" width="1" height="38" fill="#ffa500"/>
<rect x="494" y="300" width="5" height="26" fill="#ffa500"/>
<rect x="504" y="303" width="1" height="26" fill="#00bfff"/>
<rect x="502" y="314" width="5" height="9" fill="#00bfff"/>
<rect x="512" y="303" width="1" height="40" fill="#00bfff"/>
<rect x="510" y="306" width="5" height="6" fill="#00bfff"/>
<rect x="520" y="305" width="1" height="48" fill="#ffa500"/>
<rect x="518" y="305" width="5" height="20" fill="#ffa500"/>
<rect x="528" y="301" width="1" height="40" fill="#00bfff"/>
<rect x="526" y="321" width="5" height="3" fill="#00bfff"/>
<rect x="536" y="272" width="1" height="46" fill="#00bfff"/>
<rect x="534" y="278" width="5" height="40" fill="#00bfff"/>
<rect x="544" y="253" width="1" height="31" fill="#00bfff"/>
<rect x="542" y="254" width="5" height="25" fill="#00bfff"/>
<rect x="552" y="250" width="1" height="52" fill="#ffa500"/>
<rect x="550" y="253" width="5" height="42" fill="#ffa500"/>
<rect x="560" y="263" width="1" height="37" fill="#00bfff"/>
<rect x="558" y="269" width="5" height="25" fill="#00bfff"/>
<rect x="568" y="260" width="1" height="54" fill="#ffa500"/>
<rect x="566" y="268" width="5" height="33" fill="#ffa500"/>
<rect x="576" y="286" width="1" height="24" fill="#ffa500"/>
<rect x="574" y="301" width="5" height="3" fill="#ffa500"/>
<rect x="584" y="300" width="1" height="34" fill="#ffa500"/>
<rect x="582" y="303" width="5" height="15" fill="#ffa500"/>
<rect x="592" y="317" width="1" height="31" fill="#ffa500"/>
<rect x="590" y="317" width="5" height="19" fill="#ffa500"/>
<rect x="600" y="305" width="1" height="30" fill="#00bfff"/>
<rect x="598" y="315" width="5" height="20" fill="#00bfff"/>
<rect x="608" y="306" width="1" height="36" fill="#ffa500"/>
<rect x="606" y="315" width="5" height="25" fill="#ffa500"/>
<rect x="616" y="323" width="1" height="22" fill="#00bfff"/>
<rect x="614" y="329" width="5" height="9" fill="#00bfff"/>
<rect x="624" y="304" width="1" height="35" fill="#00bfff"/>
<rect x="622" y="313" width="5" height="17" fill="#00bfff"/>
<rect x="632" y="269" width="1" height="50" fill="#00bfff"/>
<rect x="630" y="277" width="5" height="37" fill="#00bfff"/>
<rect x="640" y="272" width="1" height="39" fill="#ffa500"/>
<rect x="638" y="276" width="5" height="22" fill="#ffa500"/>
<rect x="648" y="287" width="1" height="38" fill="#ffa500"/>
<rect x="646" y="297" width="5" height="19" fill="#ffa500"/>
<rect x="656" y="292" width="1" height="36" fill="#00bfff"/>
<rect x="654" y="292" width="5" height="24" fill="#00bfff"/>
<rect x="664" y="268" width="1" height="35" fill="#00bfff"/>
<rect x="662" y="271" width="5" height="16" fill="#00bfff"/>
<rect x="672" y="263" width="1" height="18" fill="#00bfff"/>
<rect x="670" y="270" width="5" height="2" fill="#00bfff"/>
<rect x="680" y="253" width="1" height="31" fill="#ffa500"/>
<rect x="678" y="270" width="5" height="8" fill="#ffa500"/>
<rect x="688" y="267" width="1" height="30" fill="#00bfff"/>
<rect x="686" y="274" width="5" height="5" fill="#00bfff"/>
<rect x="696" y="262" width="1" height="31" fill="#00bfff"/>
<rect x="694" y="262" width="5" height="13" fill="#00bfff"/>
<rect x="704" y="259" width="1" height="60" fill="#ffa500"/>
<rect x="702" y="262" width="5" height="35" fill="#ffa500"/>
<rect x="712" y="273" width="1" height="31" fill="#00bfff"/>
<rect x="710" y="293" width="5" height="4" fill="#00bfff"/>
<rect x="720" y="281" width="1" height="23" fill="#00bfff"/>
<rect x="718" y="290" width="5" height="4" fill="#00bfff"/>
<rect x="728" y="283" width="1" height="19" fill="#00bfff"/>
<rect x="726" y="288" width="5" height="3" fill="#00bfff"/>
<rect x="736" y="278" width="1" height="39" fill="#ffa500"/>
<rect x="734" y="287" width="5" height="29" fill="#ffa500"/>
<rect x="744" y="285" width="1" height="31" fill="#00bfff"/>
<rect x="742" y="293" width="5" height="23" fill="#00bfff"/>
<rect x="752" y="282" width="1" height="15" fill="#00bfff"/>
<rect x="750" y="289" width="5" height="5" fill="#00bfff"/>
<rect x="760" y="280" width="1" height="22" fill="#00bfff"/>
<rect x="758" y="288" width="5" height="2" fill="#00bfff"/>
<rect x="768" y="276" width="1" height="17" fill="#00bfff"/>
<rect x="766" y="277" width="5" height="12" fill="#00bfff"/>
<rect x="776" y="265" width="1" height="22" fill="#00bfff"/>
<rect x="774" y="276" width="5" height="2" fill="#00bfff"/>
<rect x="784" y="253" width="1" height="30" fill="#00bfff"/>
<rect x="782" y="268" width="5" height="9" fill="#00bfff"/>
<rect x="792" y="268" width="1" height="44" fill="#ffa500"/>
<rect x="790" y="273" width="5" height="23" fill="#ffa500"/>
<rect x="800" y="267" width="1" height="63" fill="#ffa500"/>
<rect x="798" y="295" width="5" height="15" fill="#ffa500"/>
<rect x="808" y="286" width="1" height="44" fill="#ffa500"/>
<rect x="806" y="308" width="5" height="18" fill="#ffa500"/>
<rect x="816" y="307" width="1" height="31" fill="#00bfff"/>
<rect x="814" y="321" width="5" height="5" fill="#00bfff"/>
<rect x="824" y="310" width="1" height="50" fill="#ffa500"/>
<rect x="822" y="325" width="5" height="13" fill="#ffa500"/>
<rect x="832" y="326" width="1" height="91" fill="#ffa500"/>
<rect x="830" y="337" width="5" height="63" fill="#ffa500"/>
<rect x="840" y="392" width="1" height="67" fill="#ffa500"/>
<rect x="838" y="398" width="5" height="56" fill="#ffa500"/>
<rect x="848" y="415" width="1" height="42" fill="#00bfff"/>
<rect x="846" y="416" width="5" height="37" fill="#00bfff"/>
<rect x="856" y="379" width="1" height="50" fill="#00bfff"/>
<rect x="854" y="400" width="5" height="19" fill="#00bfff"/>
<rect x="864" y="366" width="1" height="62" fill="#00bfff"/>
<rect x="862" y="372" width="5" height="28" fill="#00bfff"/>
<rect x="872" y="355" width="1" height="41" fill="#ffa500"/>
<rect x="870" y="371" width="5" height="7" fill="#ffa500"/>
<rect x="880" y="357" width="1" height="34" fill="#00bfff"/>
<rect x="878" y="370" width="5" height="9" fill="#00bfff"/>
<rect x="888" y="353" width="1" height="49" fill="#ffa500"/>
<rect x="886" y="368" width="5" height="25" fill="#ffa500"/>
<rect x="896" y="392" width="1" height="52" fill="#ffa500"/>
<rect x="894" y="392" width="5" height="1" fill="#ffa500"/>
<rect x="904" y="350" width="1" height="52" fill="#00bfff"/>
<rect x="902" y="354" width="5" height="42" fill="#00bfff"/>
<rect x="912" y="351" width="1" height="41" fill="#ffa500"/>
<rect x="910" y="354" width="5" height="37" fill="#ffa500"/>
<rect x="920" y="387" width="1" height="45" fill="#ffa500"/>
<rect x="918" y="391" width="5" height="27" fill="#ffa500"/>
<rect x="928" y="363" width="1" height="52" fill="#00bfff"/>
<rect x="926" y="375" width="5" height="40" fill="#00bfff"/>
<rect x="936" y="372" width="1" height="31" fill="#ffa500"/>
<rect x="934" y="374" width="5" height="19" fill="#ffa500"/>
<rect x="944" y="376" width="1" height="46" fill="#00bfff"/>
<rect x="942" y="382" width="5" height="11" fill="#00bfff"/>
<rect x="952" y="330" width="1" height="53" fill="#00bfff"/>
<rect x="950" y="349" width="5" height="33" fill="#00bfff"/>
<rect x="960" y="340" width="1" height="38" fill="#ffa500"/>
<rect x="958" y="350" width="5" height="20" fill="#ffa500"/>
<rect x="968" y="355" width="1" height="46" fill="#ffa500"/>
<rect x="966" y="369" width="5" height="23" fill="#ffa500"/>
<rect x="976" y="386" width="1" height="39" fill="#ffa500"/>
<rect x="974" y="391" width="5" height="3" fill="#ffa500"/>
<rect x="984" y="380" width="1" height="36" fill="#ffa500"/>
<rect x="982" y="392" width="5" height="9" fill="#ffa500"/>
<rect x="992" y="389" width="1" height="28" fill="#ffa500"/>
<rect x="990" y="399" width="5" height="16" fill="#ffa500"/>
<rect x="1000" y="328" width="1" height="105" fill="#00bfff"/>
<rect x="998" y="329" width="5" height="96" fill="#00bfff"/>
<rect x="1008" y="309" width="1" height="40" fill="#ffa500"/>
<rect x="1006" y="328" width="5" height="17" fill="#ffa500"/>
<rect x="1016" y="336" width="1" height="52" fill="#ffa500"/>
<rect x="1014" y="347" width="5" height="34" fill="#ffa500"/>
<rect x="1024" y="359" width="1" height="27" fill="#00bfff"/>
<rect x="1022" y="375" width="5" height="5" fill="#00bfff"/>
<rect x="1032" y="353" width="1" height="53" fill="#ffa500"/>
<rect x="1030" y="374" width="5" height="26" fill="#ffa500"/>
<rect x="1040" y="386" width="1" height="47" fill="#00bfff"/>
<rect x="1038" y="393" width="5" height="6" fill="#00bfff"/>
<rect x="1048" y="330" width="1" height="78" fill="#00bfff"/>
<rect x="1046" y="338" width="5" height="55" fill="#00bfff"/>
<rect x="1056" y="287" width="1" height="56" fill="#00bfff"/>
<rect x="1054" y="289" width="5" height="51" fill="#00bfff"/>
<rect x="1064" y="192" width="1" height="102" fill="#00bfff"/>
<rect x="1062" y="194" width="5" height="96" fill="#00bfff"/>
<rect x="1072" y="91" width="1" height="105" fill="#00bfff"/>
<rect x="1070" y="126" width="5" height="69" fill="#00bfff"/>
<rect x="1080" y="96" width="1" height="52" fill="#00bfff"/>
<rect x="1078" y="121" width="5" height="6" fill="#00bfff"/>
<rect x="1088" y="119" width="1" height="58" fill="#ffa500"/>
<rect x="1086" y="120" width="5" height="55" fill="#ffa500"/>
<rect x="1104" y="168" width="1" height="20" fill="#ffa500"/>
<rect x="1102" y="174" width="5" height="12" fill="#ffa500"/>
<rect x="1096" y="159" width="1" height="40" fill="#00ff00"/>
<rect x="1094" y="174" width="5" height="1" fill="#00ff00"/>
</g>
<line x1="296" y1="159.5" x2="1321" y2="159.5" stroke="#32cd32" stroke-width="1" stroke-dasharray="9 6 3 6"/>
<line x1="296" y1="402.5" x2="1321" y2="402.5" stroke="#32cd32" stroke-width="1" stroke-dasharray="9 6 3 6"/>
<line x1="296" y1="185.5" x2="1321" y2="185.5" stroke="#8c9aa8" stroke-width="1"/>
<rect x="1322" y="99" width="4" height="1" fill="#fff"/>
<text x="1328" y="102" class="ax">129.445</text>
<rect x="1322" y="132" width="4" height="1" fill="#fff"/>
<text x="1328" y="135" class="ax">129.380</text>
<rect x="1322" y="166" width="4" height="1" fill="#fff"/>
<text x="1328" y="169" class="ax">129.310</text>
<rect x="1322" y="199" width="4" height="1" fill="#fff"/>
<text x="1328" y="202" class="ax">129.245</text>
<rect x="1322" y="232" width="4" height="1" fill="#fff"/>
<text x="1328" y="235" class="ax">129.180</text>
<rect x="1322" y="268" width="4" height="1" fill="#fff"/>
<text x="1328" y="271" class="ax">129.110</text>
<rect x="1322" y="300" width="4" height="1" fill="#fff"/>
<text x="1328" y="303" class="ax">129.045</text>
<rect x="1322" y="334" width="4" height="1" fill="#fff"/>
<text x="1328" y="337" class="ax">128.980</text>
<rect x="1322" y="368" width="4" height="1" fill="#fff"/>
<text x="1328" y="371" class="ax">128.910</text>
<rect x="1322" y="401" width="4" height="1" fill="#fff"/>
<text x="1328" y="404" class="ax">128.845</text>
<rect x="1322" y="434" width="4" height="1" fill="#fff"/>
<text x="1328" y="437" class="ax">128.780</text>
<rect x="1322" y="468" width="4" height="1" fill="#fff"/>
<text x="1328" y="471" class="ax">128.715</text>
<rect x="1323" y="180" width="41" height="11" fill="#fff"/>
<text x="1328" y="189" class="ax" style="fill:#000">129.273</text>
<rect x="296" y="470" width="1" height="5" fill="#fff"/>
<text x="296" y="483" class="ax">14 Jul 2017</text>
<rect x="360" y="470" width="1" height="5" fill="#fff"/>
<text x="360" y="483" class="ax">14 Jul 19:30</text>
<rect x="424" y="470" width="1" height="5" fill="#fff"/>
<text x="424" y="483" class="ax">14 Jul 21:30</text>
<rect x="488" y="470" width="1" height="5" fill="#fff"/>
<text x="488" y="483" class="ax">14 Jul 23:30</text>
<rect x="552" y="470" width="1" height="5" fill="#fff"/>
<text x="552" y="483" class="ax">17 Jul 01:30</text>
<rect x="616" y="470" width="1" height="5" fill="#fff"/>
<text x="616" y="483" class="ax">17 Jul 03:30</text>
<rect x="680" y="470" width="1" height="5" fill="#fff"/>
<text x="680" y="483" class="ax">17 Jul 05:30</text>
<rect x="744" y="470" width="1" height="5" fill="#fff"/>
<text x="744" y="483" class="ax">17 Jul 07:30</text>
<rect x="808" y="470" width="1" height="5" fill="#fff"/>
<text x="808" y="483" class="ax">17 Jul 09:30</text>
<rect x="872" y="470" width="1" height="5" fill="#fff"/>
<text x="872" y="483" class="ax">17 Jul 11:30</text>
<rect x="936" y="470" width="1" height="5" fill="#fff"/>
<text x="936" y="483" class="ax">17 Jul 13:30</text>
<rect x="1000" y="470" width="1" height="5" fill="#fff"/>
<text x="1000" y="483" class="ax">17 Jul 15:30</text>
<rect x="1064" y="470" width="1" height="5" fill="#fff"/>
<text x="1064" y="483" class="ax">17 Jul 17:30</text>
<path d="M299 75.5 L306 75.5 L302.5 80 Z" fill="#fff"/>
<text x="311" y="81" class="ct" style="font-size:9.3px;white-space:pre" xml:space="preserve">EURJPY,M15  129.296 129.306 129.270 129.273</text>
<text x="300" y="94" class="ct">SuplexPending_chehab-EA</text>
<text x="300" y="106" class="ct">Idea by chehab</text>
<text x="300" y="118" class="ct">Programmed by Kira-h</text>
<text x="300" y="130" class="ct">hassan.mb@hotmail.com</text>
<text x="300" y="142" class="ct">forexprog.com/vb/showthread.php?t=31541</text>
<text x="300" y="154" class="ct">Copyright ©2017</text>
<text x="302" y="157" class="ct">#14925381 buy 0.01</text>
<text x="302" y="400" class="ct">#14925382 sell 0.01</text>
<text x="1304" y="82" class="ct" text-anchor="end">SuplexPending_chehab-EA v1.3</text>
<circle cx="1311" cy="78" r="5" fill="none" stroke="#fff" stroke-width="1"/><circle cx="1309" cy="76.5" r="0.8" fill="#fff"/><circle cx="1313" cy="76.5" r="0.8" fill="#fff"/><path d="M1308.3 79 Q1311 82 1313.7 79" stroke="#fff" fill="none" stroke-width="0.9"/>
<path d="M1110 70 L1119 70 L1114.5 74 Z" fill="#8c9aa8"/>
<path d="M794.5 159.5 L797.5 159.5 L797.5 157 L801.5 161.5 L797.5 166 L797.5 163.5 L794.5 163.5 Z" fill="#0000ff" stroke="#fff" stroke-width="1"/>
<path d="M794.5 397.5 H797.5 V395.5 L801.5 399.5 L797.5 403.5 V401.5 H794.5 Z" fill="#ff0000" stroke="#fff" stroke-width="1"/>
</svg>
</div>

<div class="a" style="left:291px;top:491px;width:1075px;height:2px;background:#fff"></div>
<!-- CHART TABS -->
<div id="ctabs" class="a">
<div class="a" style="left:0;top:0;width:1px;height:19px;background:#808080"></div>
<span class="ctab" style="left:18px">AUDUSD,Daily</span>
<span class="ctab" style="left:126px">CADJPY,Daily</span>
<span class="ctab" style="left:224px">EURGBP,Daily</span>
<span class="ctab" style="left:324px">EURJPY,Daily</span>
<span class="ctab" style="left:421px">EURUSD,Daily</span>
<span class="ctab" style="left:523px">GBPUSD,Daily</span>
<span class="ctab" style="left:624px">GBPAUD,Daily</span>
<div class="tsep" style="left:114px;top:5px;height:13px"></div>
<div class="tsep" style="left:214px;top:5px;height:13px"></div>
<div class="tsep" style="left:313px;top:5px;height:13px"></div>
<div class="tsep" style="left:410px;top:5px;height:13px"></div>
<div class="tsep" style="left:514px;top:5px;height:13px"></div>
<div class="tsep" style="left:614px;top:5px;height:13px"></div>
<div class="a" style="left:718px;top:-1px;width:93px;height:19px;background:#fff;border:1px solid #000;border-top:none"></div>
<span class="ctab" style="left:728px;color:#000;font-size:12px">EURJPY,M15</span>
<svg class="a" style="left:1043px;top:4px" width="5" height="9"><path d="M4.5 0.5 L0.5 4.5 L4.5 8.5 Z" fill="#9a9a9a"/></svg>
<svg class="a" style="left:1061px;top:4px" width="5" height="9"><path d="M0.5 0.5 L4.5 4.5 L0.5 8.5 Z" fill="#9a9a9a"/></svg>
</div>

<!-- <div class="a" style="left:0;top:0;width:1366px;height:4px;background:#f6f6f6"></div>
<div class="a" style="left:0;top:4px;width:1366px;height:1px;background:#a0a0a0"></div>
<svg class="a" style="left:4px;top:7px" width="7" height="6"><path d="M0.5 0.5 L6.5 5.5 M6.5 0.5 L0.5 5.5" stroke="#000" stroke-width="1.6"/></svg>
<div class="a" style="left:1px;top:18px;width:13px;height:181px;background:#2b7c7c"></div>
<span class="a" style="left:-14px;top:169px;width:44px;height:12px;text-align:center;transform:rotate(-90deg);font:11.5px 'Liberation Sans',sans-serif;color:#000;line-height:12px">Terminal</span>
<div class="a" style="left:15px;top:4px;width:1351px;height:172px;background:#fff;border-left:1px solid #a0a0a0;border-top:1px solid #a0a0a0;overflow:hidden">
<div class="th" style="left:0px;width:108px;background:linear-gradient(#ffffff,#ffffff 50%,#f1f2f4 51%,#f1f2f4);border-bottom:1px solid #d5d5d5;padding-left:6px;text-align:left">Order</div>
<div class="th" style="left:108px;width:150px;background:linear-gradient(#ffffff,#ffffff 50%,#f1f2f4 51%,#f1f2f4);border-bottom:1px solid #d5d5d5;">Time</div>
<div class="th" style="left:258px;width:75px;background:linear-gradient(#ffffff,#ffffff 50%,#f1f2f4 51%,#f1f2f4);border-bottom:1px solid #d5d5d5;">Type</div>
<div class="th" style="left:333px;width:58px;background:linear-gradient(#ffffff,#ffffff 50%,#f1f2f4 51%,#f1f2f4);border-bottom:1px solid #d5d5d5;">Size</div>
<div class="th" style="left:391px;width:75px;background:linear-gradient(#ffffff,#ffffff 50%,#f1f2f4 51%,#f1f2f4);border-bottom:1px solid #d5d5d5;">Symbol</div>
<div class="th" style="left:466px;width:83px;background:linear-gradient(#ffffff,#ffffff 50%,#f1f2f4 51%,#f1f2f4);border-bottom:1px solid #d5d5d5;">Price</div>
<div class="th" style="left:549px;width:83px;background:linear-gradient(#ffffff,#ffffff 50%,#f1f2f4 51%,#f1f2f4);border-bottom:1px solid #d5d5d5;">S / L</div>
<div class="th" style="left:632px;width:83px;background:linear-gradient(#ffffff,#ffffff 50%,#f1f2f4 51%,#f1f2f4);border-bottom:1px solid #d5d5d5;">T / P</div>
<div class="th" style="left:715px;width:83px;background:linear-gradient(#ffffff,#ffffff 50%,#f1f2f4 51%,#f1f2f4);border-bottom:1px solid #d5d5d5;">Price</div>
<div class="th" style="left:798px;width:83px;background:linear-gradient(#ffffff,#ffffff 50%,#f1f2f4 51%,#f1f2f4);border-bottom:1px solid #d5d5d5;">Commission</div>
<div class="th" style="left:881px;width:83px;background:linear-gradient(#ffffff,#ffffff 50%,#f1f2f4 51%,#f1f2f4);border-bottom:1px solid #d5d5d5;">Swap</div>
<div class="th" style="left:964px;width:124px;background:linear-gradient(#ffffff,#ffffff 50%,#f1f2f4 51%,#f1f2f4);border-bottom:1px solid #d5d5d5;">Profit</div>
<div class="th" style="left:1088px;width:258px;background:linear-gradient(#ffffff,#ffffff 50%,#f1f2f4 51%,#f1f2f4);border-bottom:1px solid #d5d5d5;">Comment</div>
<svg class="a" style="left:50px;top:9px" width="9" height="8"><path d="M0.5 7.5 L4.5 0.5 L8.5 7.5 Z" fill="none" stroke="#c8c8c8"/><path d="M0.5 7.5 L4.5 0.5" stroke="#888"/></svg>
<div class="a" style="left:0;top:24px;width:1351px;height:20px;background:#ffffff;border-bottom:1px solid #d0d0d0"></div>
<svg class="a" style="left:3px;top:26px" width="15" height="16" viewBox="0 0 15 16"><path d="M1.5 1.5 H8.5 L11.5 4.5 V14.5 H1.5 Z" fill="#f8f8f8" stroke="#666"/><path d="M8.5 1.5 V4.5 H11.5" fill="none" stroke="#666"/><circle cx="11" cy="12" r="3.2" fill="#2a7fd4" stroke="#fff" stroke-width="0.6"/></svg>
<div class="td" style="left:0px;top:24px;width:108px;text-align:left;padding-left:21px">14925381</div>
<div class="td" style="left:108px;top:24px;width:150px">2017.07.17 17:47:43</div>
<div class="td" style="left:258px;top:24px;width:75px">buy</div>
<div class="td" style="left:333px;top:24px;width:58px">0.01</div>
<div class="td" style="left:391px;top:24px;width:75px">eurjpy</div>
<div class="td" style="left:466px;top:24px;width:83px">129.324</div>
<div class="td" style="left:549px;top:24px;width:83px">0.000</div>
<div class="td" style="left:632px;top:24px;width:83px">129.520</div>
<div class="td" style="left:715px;top:24px;width:83px">129.266</div>
<div class="td" style="left:798px;top:24px;width:83px">0.00</div>
<div class="td" style="left:881px;top:24px;width:83px">0.00</div>
<div class="td" style="left:964px;top:24px;width:124px;padding-right:23px">-0.51</div>
<svg class="a" style="left:1074px;top:31px" width="8" height="8"><path d="M1 1 L7 7 M7 1 L1 7" stroke="#888" stroke-width="1.6"/></svg>
<div class="td" style="left:1088px;top:24px;width:258px">Kira-h</div>
<div class="a" style="left:0;top:44px;width:1351px;height:20px;background:#ececec;border-bottom:1px solid #d0d0d0"></div>
<svg class="a" style="left:3px;top:46px" width="15" height="16" viewBox="0 0 15 16"><path d="M1.5 1.5 H8.5 L11.5 4.5 V14.5 H1.5 Z" fill="#f8f8f8" stroke="#666"/><path d="M8.5 1.5 V4.5 H11.5" fill="none" stroke="#666"/><circle cx="11" cy="12" r="3.2" fill="#e05020" stroke="#fff" stroke-width="0.6"/></svg>
<div class="td" style="left:0px;top:44px;width:108px;text-align:left;padding-left:21px">14925382</div>
<div class="td" style="left:108px;top:44px;width:150px">2017.07.17 10:22:57</div>
<div class="td" style="left:258px;top:44px;width:75px">sell</div>
<div class="td" style="left:333px;top:44px;width:58px">0.01</div>
<div class="td" style="left:391px;top:44px;width:75px">eurjpy</div>
<div class="td" style="left:466px;top:44px;width:83px">128.844</div>
<div class="td" style="left:549px;top:44px;width:83px">0.000</div>
<div class="td" style="left:632px;top:44px;width:83px">128.650</div>
<div class="td" style="left:715px;top:44px;width:83px">129.296</div>
<div class="td" style="left:798px;top:44px;width:83px">0.00</div>
<div class="td" style="left:881px;top:44px;width:83px">0.00</div>
<div class="td" style="left:964px;top:44px;width:124px;padding-right:23px">-4.01</div>
<svg class="a" style="left:1074px;top:51px" width="8" height="8"><path d="M1 1 L7 7 M7 1 L1 7" stroke="#888" stroke-width="1.6"/></svg>
<div class="td" style="left:1088px;top:44px;width:258px">Kira-h</div>
<div class="a" style="left:0;top:64px;width:1351px;height:20px;background:#c8c8c8"></div>
<svg class="a" style="left:3px;top:67px" width="12" height="14" viewBox="0 0 12 14"><rect x="0.5" y="0.5" width="11" height="13" rx="1" fill="#fafafa" stroke="#777"/><path d="M4 4 H8 V7 H10 L6 11 L2 7 H4 Z" fill="#e04020"/></svg>
<span class="a" style="left:23px;top:67px;font:bold 11.8px 'Liberation Sans',sans-serif;line-height:13px;color:#000;white-space:pre">Balance: 100 000.00 USD  Equity: 99 995.48  Margin: 11.46  Free margin: 99 984.02  Margin level: 872378.21%</span>
<span class="a" style="left:1038px;top:67px;font:bold 11.6px 'Liberation Sans',sans-serif;line-height:13px;color:#000">-4.52</span>
</div>
<div class="a" style="left:15px;top:176px;width:1347px;height:1px;background:#000"></div>
<div class="a" style="left:18px;top:176px;width:52px;height:21px;background:#fff;border:1px solid #000;border-top:none"></div>
<span class="a" style="left:28px;top:178px;font:13px 'Liberation Serif',serif;line-height:15px;color:#000;-webkit-text-stroke:0.35px #000">Trade</span>
<span class="btab" style="left:78px;top:178px">Exposure</span>
<span class="btab" style="left:148px;top:178px">Account History</span>
<span class="btab" style="left:258px;top:178px">News</span>
<span class="btab" style="left:308px;top:178px">Alerts</span>
<span class="btab" style="left:361px;top:178px">Mailbox</span>
<span class="btab" style="left:431px;top:178px">Market</span>
<span class="btab" style="left:489px;top:178px">Signals</span>
<span class="btab" style="left:548px;top:178px">Code Base</span>
<span class="btab" style="left:625px;top:178px">Experts</span>
<span class="btab" style="left:684px;top:178px">Journal</span>
<span class="a" style="left:406px;top:185px;font:bold 9.5px 'Liberation Serif',serif;line-height:10px;color:#e02020">8</span>
<div class="tsep" style="left:138px;top:181px;height:13px"></div>
<div class="tsep" style="left:248px;top:181px;height:13px"></div>
<div class="tsep" style="left:298px;top:181px;height:13px"></div>
<div class="tsep" style="left:351px;top:181px;height:13px"></div>
<div class="tsep" style="left:421px;top:181px;height:13px"></div>
<div class="tsep" style="left:479px;top:181px;height:13px"></div>
<div class="tsep" style="left:538px;top:181px;height:13px"></div>
<div class="tsep" style="left:615px;top:181px;height:13px"></div>
<div class="tsep" style="left:674px;top:181px;height:13px"></div>
<div class="tsep" style="left:733px;top:181px;height:13px"></div>
<div class="a" style="left:1362px;top:4px;width:1px;height:195px;background:#fff"></div>INAL -->
<div id="term" class="a">
<div class="a" style="left:0;top:0;width:1366px;height:4px;background:#f6f6f6"></div>
<div class="a" style="left:0;top:4px;width:1366px;height:1px;background:#a0a0a0"></div>
<svg class="a" style="left:4px;top:7px" width="7" height="6"><path d="M0.5 0.5 L6.5 5.5 M6.5 0.5 L0.5 5.5" stroke="#000" stroke-width="1.6"/></svg>
<div class="a" style="left:1px;top:18px;width:13px;height:181px;background:#2b7c7c"></div>
<span class="a" style="left:-14px;top:169px;width:44px;height:12px;text-align:center;transform:rotate(-90deg);font:11.5px 'Liberation Sans',sans-serif;color:#000;line-height:12px">Terminal</span>
<div class="a" style="left:15px;top:4px;width:1351px;height:172px;background:#fff;border-left:1px solid #a0a0a0;border-top:1px solid #a0a0a0;overflow:hidden">
<div class="th" style="left:0px;width:108px;background:linear-gradient(#ffffff,#ffffff 50%,#f1f2f4 51%,#f1f2f4);border-bottom:1px solid #d5d5d5;padding-left:6px;text-align:left">Order</div>
<div class="th" style="left:108px;width:150px;background:linear-gradient(#ffffff,#ffffff 50%,#f1f2f4 51%,#f1f2f4);border-bottom:1px solid #d5d5d5;">Time</div>
<div class="th" style="left:258px;width:75px;background:linear-gradient(#ffffff,#ffffff 50%,#f1f2f4 51%,#f1f2f4);border-bottom:1px solid #d5d5d5;">Type</div>
<div class="th" style="left:333px;width:58px;background:linear-gradient(#ffffff,#ffffff 50%,#f1f2f4 51%,#f1f2f4);border-bottom:1px solid #d5d5d5;">Size</div>
<div class="th" style="left:391px;width:75px;background:linear-gradient(#ffffff,#ffffff 50%,#f1f2f4 51%,#f1f2f4);border-bottom:1px solid #d5d5d5;">Symbol</div>
<div class="th" style="left:466px;width:83px;background:linear-gradient(#ffffff,#ffffff 50%,#f1f2f4 51%,#f1f2f4);border-bottom:1px solid #d5d5d5;">Price</div>
<div class="th" style="left:549px;width:83px;background:linear-gradient(#ffffff,#ffffff 50%,#f1f2f4 51%,#f1f2f4);border-bottom:1px solid #d5d5d5;">S / L</div>
<div class="th" style="left:632px;width:83px;background:linear-gradient(#ffffff,#ffffff 50%,#f1f2f4 51%,#f1f2f4);border-bottom:1px solid #d5d5d5;">T / P</div>
<div class="th" style="left:715px;width:83px;background:linear-gradient(#ffffff,#ffffff 50%,#f1f2f4 51%,#f1f2f4);border-bottom:1px solid #d5d5d5;">Price</div>
<div class="th" style="left:798px;width:83px;background:linear-gradient(#ffffff,#ffffff 50%,#f1f2f4 51%,#f1f2f4);border-bottom:1px solid #d5d5d5;">Commission</div>
<div class="th" style="left:881px;width:83px;background:linear-gradient(#ffffff,#ffffff 50%,#f1f2f4 51%,#f1f2f4);border-bottom:1px solid #d5d5d5;">Swap</div>
<div class="th" style="left:964px;width:124px;background:linear-gradient(#ffffff,#ffffff 50%,#f1f2f4 51%,#f1f2f4);border-bottom:1px solid #d5d5d5;">Profit</div>
<div class="th" style="left:1088px;width:258px;background:linear-gradient(#ffffff,#ffffff 50%,#f1f2f4 51%,#f1f2f4);border-bottom:1px solid #d5d5d5;">Comment</div>
<svg class="a" style="left:50px;top:9px" width="9" height="8"><path d="M0.5 7.5 L4.5 0.5 L8.5 7.5 Z" fill="none" stroke="#c8c8c8"/><path d="M0.5 7.5 L4.5 0.5" stroke="#888"/></svg>
<div class="a" style="left:0;top:24px;width:1351px;height:20px;background:#ffffff;border-bottom:1px solid #d0d0d0"></div>
<svg class="a" style="left:3px;top:26px" width="15" height="16" viewBox="0 0 15 16"><path d="M1.5 1.5 H8.5 L11.5 4.5 V14.5 H1.5 Z" fill="#f8f8f8" stroke="#666"/><path d="M8.5 1.5 V4.5 H11.5" fill="none" stroke="#666"/><circle cx="11" cy="12" r="3.2" fill="#2a7fd4" stroke="#fff" stroke-width="0.6"/></svg>
<div class="td" style="left:0px;top:24px;width:108px;text-align:left;padding-left:21px">14925381</div>
<div class="td" style="left:108px;top:24px;width:150px">2017.07.17 17:47:43</div>
<div class="td" style="left:258px;top:24px;width:75px">buy</div>
<div class="td" style="left:333px;top:24px;width:58px">0.01</div>
<div class="td" style="left:391px;top:24px;width:75px">eurjpy</div>
<div class="td" style="left:466px;top:24px;width:83px">129.324</div>
<div class="td" style="left:549px;top:24px;width:83px">0.000</div>
<div class="td" style="left:632px;top:24px;width:83px">129.520</div>
<div class="td" style="left:715px;top:24px;width:83px">129.266</div>
<div class="td" style="left:798px;top:24px;width:83px">0.00</div>
<div class="td" style="left:881px;top:24px;width:83px">0.00</div>
<div class="td" style="left:964px;top:24px;width:124px;padding-right:23px">-0.51</div>
<svg class="a" style="left:1074px;top:31px" width="8" height="8"><path d="M1 1 L7 7 M7 1 L1 7" stroke="#888" stroke-width="1.6"/></svg>
<div class="td" style="left:1088px;top:24px;width:258px">Kira-h</div>
<div class="a" style="left:0;top:44px;width:1351px;height:20px;background:#ececec;border-bottom:1px solid #d0d0d0"></div>
<svg class="a" style="left:3px;top:46px" width="15" height="16" viewBox="0 0 15 16"><path d="M1.5 1.5 H8.5 L11.5 4.5 V14.5 H1.5 Z" fill="#f8f8f8" stroke="#666"/><path d="M8.5 1.5 V4.5 H11.5" fill="none" stroke="#666"/><circle cx="11" cy="12" r="3.2" fill="#e05020" stroke="#fff" stroke-width="0.6"/></svg>
<div class="td" style="left:0px;top:44px;width:108px;text-align:left;padding-left:21px">14925382</div>
<div class="td" style="left:108px;top:44px;width:150px">2017.07.17 10:22:57</div>
<div class="td" style="left:258px;top:44px;width:75px">sell</div>
<div class="td" style="left:333px;top:44px;width:58px">0.01</div>
<div class="td" style="left:391px;top:44px;width:75px">eurjpy</div>
<div class="td" style="left:466px;top:44px;width:83px">128.844</div>
<div class="td" style="left:549px;top:44px;width:83px">0.000</div>
<div class="td" style="left:632px;top:44px;width:83px">128.650</div>
<div class="td" style="left:715px;top:44px;width:83px">129.296</div>
<div class="td" style="left:798px;top:44px;width:83px">0.00</div>
<div class="td" style="left:881px;top:44px;width:83px">0.00</div>
<div class="td" style="left:964px;top:44px;width:124px;padding-right:23px">-4.01</div>
<svg class="a" style="left:1074px;top:51px" width="8" height="8"><path d="M1 1 L7 7 M7 1 L1 7" stroke="#888" stroke-width="1.6"/></svg>
<div class="td" style="left:1088px;top:44px;width:258px">Kira-h</div>
<div class="a" style="left:0;top:64px;width:1351px;height:20px;background:#c8c8c8"></div>
<svg class="a" style="left:3px;top:67px" width="12" height="14" viewBox="0 0 12 14"><rect x="0.5" y="0.5" width="11" height="13" rx="1" fill="#fafafa" stroke="#777"/><path d="M4 4 H8 V7 H10 L6 11 L2 7 H4 Z" fill="#e04020"/></svg>
<span class="a" style="left:23px;top:67px;font:bold 11.8px 'Liberation Sans',sans-serif;line-height:13px;color:#000;white-space:pre">Balance: 100 000.00 USD  Equity: 99 995.48  Margin: 11.46  Free margin: 99 984.02  Margin level: 872378.21%</span>
<span class="a" style="left:1038px;top:67px;font:bold 11.6px 'Liberation Sans',sans-serif;line-height:13px;color:#000">-4.52</span>
</div>
<div class="a" style="left:15px;top:176px;width:1347px;height:1px;background:#000"></div>
<div class="a" style="left:18px;top:176px;width:52px;height:21px;background:#fff;border:1px solid #000;border-top:none"></div>
<span class="a" style="left:28px;top:178px;font:13px 'Liberation Serif',serif;line-height:15px;color:#000;-webkit-text-stroke:0.35px #000">Trade</span>
<span class="btab" style="left:78px;top:178px">Exposure</span>
<span class="btab" style="left:148px;top:178px">Account History</span>
<span class="btab" style="left:258px;top:178px">News</span>
<span class="btab" style="left:308px;top:178px">Alerts</span>
<span class="btab" style="left:361px;top:178px">Mailbox</span>
<span class="btab" style="left:431px;top:178px">Market</span>
<span class="btab" style="left:489px;top:178px">Signals</span>
<span class="btab" style="left:548px;top:178px">Code Base</span>
<span class="btab" style="left:625px;top:178px">Experts</span>
<span class="btab" style="left:684px;top:178px">Journal</span>
<span class="a" style="left:406px;top:185px;font:bold 9.5px 'Liberation Serif',serif;line-height:10px;color:#e02020">8</span>
<div class="tsep" style="left:138px;top:181px;height:13px"></div>
<div class="tsep" style="left:248px;top:181px;height:13px"></div>
<div class="tsep" style="left:298px;top:181px;height:13px"></div>
<div class="tsep" style="left:351px;top:181px;height:13px"></div>
<div class="tsep" style="left:421px;top:181px;height:13px"></div>
<div class="tsep" style="left:479px;top:181px;height:13px"></div>
<div class="tsep" style="left:538px;top:181px;height:13px"></div>
<div class="tsep" style="left:615px;top:181px;height:13px"></div>
<div class="tsep" style="left:674px;top:181px;height:13px"></div>
<div class="tsep" style="left:733px;top:181px;height:13px"></div>
<div class="a" style="left:1362px;top:4px;width:1px;height:195px;background:#fff"></div>
</div>

<!-- STATUS -->
<div id="status" class="a">
  <span style="left:2px">For Help, press F1</span>
  <div class="a" style="left:570px;top:3px;width:1px;height:20px;background:#a0a0a0"></div>
  <span style="left:576px">Default</span>
  <div class="a" style="left:706px;top:3px;width:1px;height:20px;background:#a0a0a0"></div>
  <div class="a" style="left:823px;top:3px;width:1px;height:20px;background:#a0a0a0"></div>
  <div class="a" style="left:905px;top:3px;width:1px;height:20px;background:#a0a0a0"></div>
  <div class="a" style="left:986px;top:3px;width:1px;height:20px;background:#a0a0a0"></div>
  <div class="a" style="left:1064px;top:3px;width:1px;height:20px;background:#a0a0a0"></div>
  <div class="a" style="left:1143px;top:3px;width:1px;height:20px;background:#a0a0a0"></div>
  <div class="a" style="left:1221px;top:3px;width:1px;height:20px;background:#a0a0a0"></div>
  <svg class="a" style="left:1227px;top:6px" width="24" height="14" viewBox="0 0 24 14">
    <g fill="#8a1a10"><rect x="0" y="7" width="2" height="7"/><rect x="3" y="6" width="2" height="8"/><rect x="6" y="5" width="2" height="9"/><rect x="9" y="4" width="2" height="10"/><rect x="12" y="3" width="2" height="11"/><rect x="15" y="2" width="2" height="12"/><rect x="18" y="1" width="2" height="13"/><rect x="21" y="0" width="2" height="14"/></g>
    <g fill="#5a8a1a"><rect x="0" y="0" width="2" height="7"/><rect x="3" y="0" width="2" height="6"/><rect x="6" y="0" width="2" height="5"/><rect x="9" y="0" width="2" height="4"/><rect x="12" y="0" width="2" height="3"/><rect x="15" y="0" width="2" height="2"/><rect x="18" y="0" width="2" height="1"/></g>
  </svg>
  <span style="left:1254px">21772/12 kb</span>
  <svg class="a" style="left:13px;top:18px" width="29" height="6"><ellipse cx="14.5" cy="13" rx="13" ry="12.5" fill="#c8d8e6" stroke="#3a6080" stroke-width="1.2"/></svg>
</div>

</body></html>
